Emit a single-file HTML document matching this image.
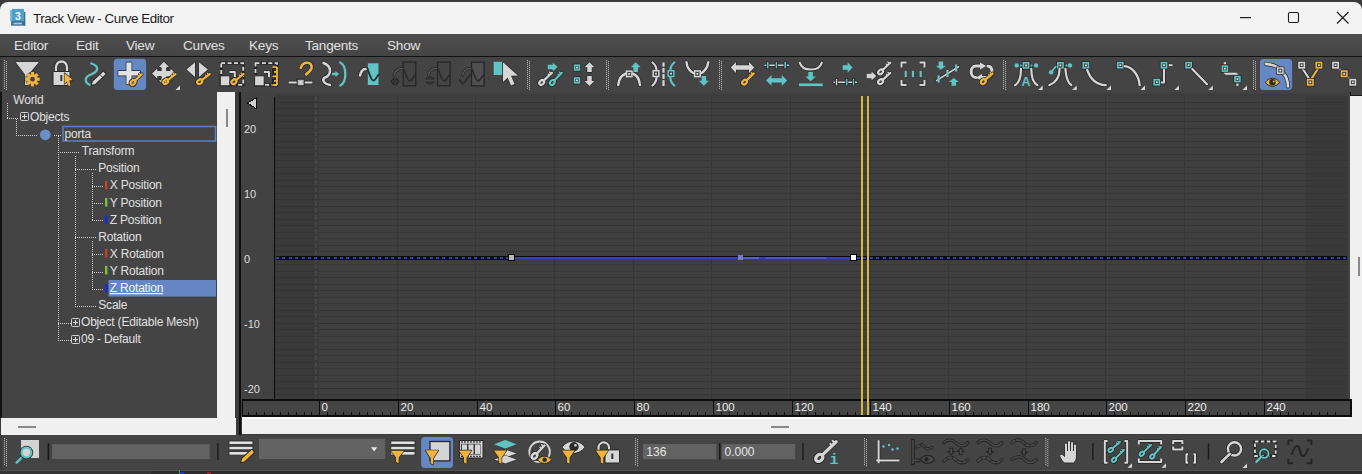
<!DOCTYPE html>
<html><head><meta charset="utf-8">
<style>
*{margin:0;padding:0;box-sizing:border-box}
html,body{width:1362px;height:474px;overflow:hidden;background:#3a3a3a;font-family:"Liberation Sans",sans-serif}
.abs{position:absolute}
#title{left:0;top:2px;width:1362px;height:32px;background:#f3f3f3;border-radius:8px 8px 0 0}
#title .t{left:33px;top:9px;font-size:13.4px;color:#1c1c1c;letter-spacing:-0.45px;white-space:nowrap}
#menu{left:0;top:34px;width:1362px;height:23px;background:linear-gradient(#4e4e4e,#454545);border-bottom:1px solid #111}
#menu span{position:absolute;top:3.6px;font-size:13.6px;letter-spacing:-0.25px;color:#e0e0e0;white-space:nowrap}
#tb{left:0;top:57px;width:1362px;height:35px;background:#444;border-left:2px solid #3a3a3a}
#tree{left:0;top:92px;width:217px;height:326px;background:#444;border-left:2px solid #121212}
#tree .r{position:absolute;font-size:12px;color:#e2e2e2;white-space:nowrap;line-height:14px}
#vs1{left:217px;top:92px;width:18px;height:326px;background:#f0f0f0}
#hs1{left:1px;top:418px;width:235px;height:17px;background:#f0f0f0}
#sep{left:236px;top:92px;width:6px;height:343px;background:#3a3a3a}
#graph{left:241px;top:92px;width:1109px;height:325px;background:#434343}
#vs2{left:1350px;top:96px;width:12px;height:338px;background:#f0f0f0}
#hs2{left:242px;top:417px;width:1108px;height:17px;background:#f0f0f0}
#btb{left:0;top:435px;width:1362px;height:35px;background:#444;border-left:2px solid #3a3a3a;border-bottom-left-radius:6px}
#bstrip{left:0;top:470px;width:1362px;height:4px;background:#2c2c2c;border-top:1px solid #525252}
</style></head><body>
<div id="title" class="abs">
  <div class="abs t">Track View - Curve Editor</div>
  <svg class="abs" style="left:0;top:0" width="60" height="32">
    <rect x="10" y="8" width="3" height="11" fill="#7ab8dc"/>
    <rect x="24" y="10" width="1.3" height="13.5" fill="#3b6f90"/>
    <rect x="12" y="6.9" width="12" height="12.2" fill="#4f9fcb"/>
    <rect x="11.1" y="19" width="14" height="4.7" fill="#3d7193"/>
    <text x="15" y="18.4" font-size="10.5" font-weight="bold" fill="#f4f8fb" font-family="Liberation Sans">3</text>
    <rect x="13.5" y="20.6" width="8.5" height="1.8" fill="#a9c4d6"/>
  </svg>
  <svg class="abs" style="left:0;top:-2px" width="1362" height="34">
    <rect x="1240" y="17" width="11" height="1.2" fill="#1c1c1c"/>
    <rect x="1288.5" y="12.5" width="10" height="10" rx="1.5" fill="none" stroke="#1c1c1c" stroke-width="1.1"/>
    <path d="M1337,12 L1348.5,23.5 M1348.5,12 L1337,23.5" stroke="#1c1c1c" stroke-width="1.2"/>
  </svg>

</div>
<div id="menu" class="abs">
  <span style="left:14px">Editor</span><span style="left:76px">Edit</span><span style="left:126px">View</span><span style="left:183px">Curves</span><span style="left:249px">Keys</span><span style="left:305px">Tangents</span><span style="left:387px">Show</span>
</div>
<div id="tb" class="abs"></div>
<div id="tree" class="abs"></div>
<svg class="abs" style="left:0;top:0" width="240" height="474"><text x="13.3" y="103.9" fill="#e0e0e0" font-size="12" letter-spacing="-0.2" font-family="Liberation Sans" >World</text><line x1="7.5" y1="103" x2="7.5" y2="118" stroke="#cfcfcf" stroke-width="1" stroke-dasharray="1,1"/><line x1="7" y1="118.5" x2="19" y2="118.5" stroke="#cfcfcf" stroke-width="1" stroke-dasharray="1,1"/><rect x="20.5" y="112.5" width="8" height="8" fill="none" stroke="#d0d0d0" stroke-width="1" rx="1"/><rect x="22" y="116" width="5" height="1" fill="#d8d8d8"/><rect x="24" y="114" width="1" height="5" fill="#d8d8d8"/><text x="30" y="121.0" fill="#e0e0e0" font-size="12" letter-spacing="-0.2" font-family="Liberation Sans" >Objects</text><line x1="16.5" y1="119" x2="16.5" y2="135" stroke="#cfcfcf" stroke-width="1" stroke-dasharray="1,1"/><line x1="16" y1="135.5" x2="37" y2="135.5" stroke="#cfcfcf" stroke-width="1" stroke-dasharray="1,1"/><circle cx="45.3" cy="134.8" r="5.4" fill="#6b8dc9"/><line x1="54" y1="135.5" x2="62" y2="135.5" stroke="#cfcfcf" stroke-width="1" stroke-dasharray="1,1"/><rect x="63" y="126.5" width="152.5" height="14.5" fill="none" stroke="#5f7fbf" stroke-width="1.5"/><text x="64.5" y="138.1" fill="#e0e0e0" font-size="12" letter-spacing="-0.2" font-family="Liberation Sans" >porta</text><line x1="58.5" y1="136" x2="58.5" y2="340" stroke="#cfcfcf" stroke-width="1" stroke-dasharray="1,1"/><line x1="58" y1="152.5" x2="80" y2="152.5" stroke="#cfcfcf" stroke-width="1" stroke-dasharray="1,1"/><text x="81.8" y="155.2" fill="#e0e0e0" font-size="12" letter-spacing="-0.2" font-family="Liberation Sans" >Transform</text><line x1="75.5" y1="156" x2="75.5" y2="306" stroke="#cfcfcf" stroke-width="1" stroke-dasharray="1,1"/><line x1="75" y1="169.5" x2="96" y2="169.5" stroke="#cfcfcf" stroke-width="1" stroke-dasharray="1,1"/><text x="98.3" y="172.3" fill="#e0e0e0" font-size="12" letter-spacing="-0.2" font-family="Liberation Sans" >Position</text><line x1="92.5" y1="173" x2="92.5" y2="220" stroke="#cfcfcf" stroke-width="1" stroke-dasharray="1,1"/><line x1="92" y1="186.5" x2="104" y2="186.5" stroke="#cfcfcf" stroke-width="1" stroke-dasharray="1,1"/><rect x="105" y="181" width="2.4" height="8.5" fill="#c8401e"/><text x="109.8" y="189.4" fill="#e0e0e0" font-size="12" letter-spacing="-0.2" font-family="Liberation Sans" >X Position</text><line x1="92" y1="203.5" x2="104" y2="203.5" stroke="#cfcfcf" stroke-width="1" stroke-dasharray="1,1"/><rect x="105" y="198" width="2.4" height="8.5" fill="#78c040"/><text x="109.8" y="206.5" fill="#e0e0e0" font-size="12" letter-spacing="-0.2" font-family="Liberation Sans" >Y Position</text><line x1="92" y1="220.5" x2="104" y2="220.5" stroke="#cfcfcf" stroke-width="1" stroke-dasharray="1,1"/><rect x="105" y="215" width="2.4" height="8.5" fill="#1428e8"/><text x="109.8" y="223.6" fill="#e0e0e0" font-size="12" letter-spacing="-0.2" font-family="Liberation Sans" >Z Position</text><line x1="75" y1="237.5" x2="96" y2="237.5" stroke="#cfcfcf" stroke-width="1" stroke-dasharray="1,1"/><text x="98.3" y="240.7" fill="#e0e0e0" font-size="12" letter-spacing="-0.2" font-family="Liberation Sans" >Rotation</text><line x1="92.5" y1="241" x2="92.5" y2="289" stroke="#cfcfcf" stroke-width="1" stroke-dasharray="1,1"/><rect x="108.5" y="280" width="107.5" height="16.6" fill="#6586c2"/><line x1="92" y1="254.5" x2="104" y2="254.5" stroke="#cfcfcf" stroke-width="1" stroke-dasharray="1,1"/><rect x="105" y="249" width="2.4" height="8.5" fill="#c8401e"/><text x="109.8" y="257.8" fill="#e0e0e0" font-size="12" letter-spacing="-0.2" font-family="Liberation Sans" >X Rotation</text><line x1="92" y1="272.5" x2="104" y2="272.5" stroke="#cfcfcf" stroke-width="1" stroke-dasharray="1,1"/><rect x="105" y="266" width="2.4" height="8.5" fill="#78c040"/><text x="109.8" y="274.9" fill="#e0e0e0" font-size="12" letter-spacing="-0.2" font-family="Liberation Sans" >Y Rotation</text><line x1="92" y1="289.5" x2="104" y2="289.5" stroke="#cfcfcf" stroke-width="1" stroke-dasharray="1,1"/><rect x="105" y="284" width="2.4" height="8.5" fill="#1428e8"/><text x="109.8" y="292.0" fill="#f4f4f4" font-size="12" letter-spacing="-0.2" font-family="Liberation Sans" text-decoration="underline">Z Rotation</text><rect x="110" y="293" width="53" height="1" fill="#f0f0f0"/><line x1="75" y1="306.5" x2="96" y2="306.5" stroke="#cfcfcf" stroke-width="1" stroke-dasharray="1,1"/><text x="98.3" y="309.1" fill="#e0e0e0" font-size="12" letter-spacing="-0.2" font-family="Liberation Sans" >Scale</text><line x1="58" y1="323.5" x2="71" y2="323.5" stroke="#cfcfcf" stroke-width="1" stroke-dasharray="1,1"/><rect x="71.5" y="318.5" width="8" height="8" fill="none" stroke="#d0d0d0" stroke-width="1" rx="1"/><rect x="73" y="322" width="5" height="1" fill="#d8d8d8"/><rect x="75" y="320" width="1" height="5" fill="#d8d8d8"/><text x="81" y="326.2" fill="#e0e0e0" font-size="12" letter-spacing="-0.2" font-family="Liberation Sans" >Object (Editable Mesh)</text><line x1="58" y1="340.5" x2="71" y2="340.5" stroke="#cfcfcf" stroke-width="1" stroke-dasharray="1,1"/><rect x="71.5" y="335.5" width="8" height="8" fill="none" stroke="#d0d0d0" stroke-width="1" rx="1"/><rect x="73" y="339" width="5" height="1" fill="#d8d8d8"/><rect x="75" y="337" width="1" height="5" fill="#d8d8d8"/><text x="81" y="343.3" fill="#e0e0e0" font-size="12" letter-spacing="-0.2" font-family="Liberation Sans" >09 - Default</text></svg>
<div id="vs1" class="abs"></div>
<div id="hs1" class="abs"></div>
<div id="sep" class="abs"></div>
<div id="graph" class="abs"></div>
<svg class="abs" style="left:0;top:0" width="1362" height="474" shape-rendering="crispEdges"><rect x="241" y="92" width="1109" height="307" fill="#424242" /><rect x="275" y="94" width="1071" height="2" fill="#3c3c3c" /><rect x="275" y="96" width="1073" height="303" fill="#3a3a3a" /><rect x="319" y="96" width="986" height="303" fill="#3f3f3f" /><rect x="275" y="394" width="44" height="1" fill="#343434" /><rect x="319" y="394" width="986" height="1" fill="#363636" /><rect x="1305" y="394" width="43" height="1" fill="#363636" /><rect x="275" y="388" width="44" height="1" fill="#343434" /><rect x="319" y="388" width="986" height="1" fill="#333333" /><rect x="1305" y="388" width="43" height="1" fill="#363636" /><rect x="275" y="381" width="44" height="1" fill="#343434" /><rect x="319" y="381" width="986" height="1" fill="#363636" /><rect x="1305" y="381" width="43" height="1" fill="#363636" /><rect x="275" y="375" width="44" height="1" fill="#343434" /><rect x="319" y="375" width="986" height="1" fill="#363636" /><rect x="1305" y="375" width="43" height="1" fill="#363636" /><rect x="275" y="368" width="44" height="1" fill="#343434" /><rect x="319" y="368" width="986" height="1" fill="#363636" /><rect x="1305" y="368" width="43" height="1" fill="#363636" /><rect x="275" y="362" width="44" height="1" fill="#343434" /><rect x="319" y="362" width="986" height="1" fill="#363636" /><rect x="1305" y="362" width="43" height="1" fill="#363636" /><rect x="275" y="355" width="44" height="1" fill="#343434" /><rect x="319" y="355" width="986" height="1" fill="#363636" /><rect x="1305" y="355" width="43" height="1" fill="#363636" /><rect x="275" y="349" width="44" height="1" fill="#343434" /><rect x="319" y="349" width="986" height="1" fill="#363636" /><rect x="1305" y="349" width="43" height="1" fill="#363636" /><rect x="275" y="342" width="44" height="1" fill="#343434" /><rect x="319" y="342" width="986" height="1" fill="#363636" /><rect x="1305" y="342" width="43" height="1" fill="#363636" /><rect x="275" y="336" width="44" height="1" fill="#343434" /><rect x="319" y="336" width="986" height="1" fill="#363636" /><rect x="1305" y="336" width="43" height="1" fill="#363636" /><rect x="275" y="329" width="44" height="1" fill="#343434" /><rect x="319" y="329" width="986" height="1" fill="#363636" /><rect x="1305" y="329" width="43" height="1" fill="#363636" /><rect x="275" y="323" width="44" height="1" fill="#343434" /><rect x="319" y="323" width="986" height="1" fill="#333333" /><rect x="1305" y="323" width="43" height="1" fill="#363636" /><rect x="275" y="316" width="44" height="1" fill="#343434" /><rect x="319" y="316" width="986" height="1" fill="#363636" /><rect x="1305" y="316" width="43" height="1" fill="#363636" /><rect x="275" y="310" width="44" height="1" fill="#343434" /><rect x="319" y="310" width="986" height="1" fill="#363636" /><rect x="1305" y="310" width="43" height="1" fill="#363636" /><rect x="275" y="303" width="44" height="1" fill="#343434" /><rect x="319" y="303" width="986" height="1" fill="#363636" /><rect x="1305" y="303" width="43" height="1" fill="#363636" /><rect x="275" y="297" width="44" height="1" fill="#343434" /><rect x="319" y="297" width="986" height="1" fill="#363636" /><rect x="1305" y="297" width="43" height="1" fill="#363636" /><rect x="275" y="290" width="44" height="1" fill="#343434" /><rect x="319" y="290" width="986" height="1" fill="#363636" /><rect x="1305" y="290" width="43" height="1" fill="#363636" /><rect x="275" y="284" width="44" height="1" fill="#343434" /><rect x="319" y="284" width="986" height="1" fill="#363636" /><rect x="1305" y="284" width="43" height="1" fill="#363636" /><rect x="275" y="277" width="44" height="1" fill="#343434" /><rect x="319" y="277" width="986" height="1" fill="#363636" /><rect x="1305" y="277" width="43" height="1" fill="#363636" /><rect x="275" y="271" width="44" height="1" fill="#343434" /><rect x="319" y="271" width="986" height="1" fill="#363636" /><rect x="1305" y="271" width="43" height="1" fill="#363636" /><rect x="275" y="264" width="44" height="1" fill="#343434" /><rect x="319" y="264" width="986" height="1" fill="#363636" /><rect x="1305" y="264" width="43" height="1" fill="#363636" /><rect x="275" y="258" width="44" height="1" fill="#343434" /><rect x="319" y="258" width="986" height="1" fill="#333333" /><rect x="1305" y="258" width="43" height="1" fill="#363636" /><rect x="275" y="251" width="44" height="1" fill="#343434" /><rect x="319" y="251" width="986" height="1" fill="#363636" /><rect x="1305" y="251" width="43" height="1" fill="#363636" /><rect x="275" y="245" width="44" height="1" fill="#343434" /><rect x="319" y="245" width="986" height="1" fill="#363636" /><rect x="1305" y="245" width="43" height="1" fill="#363636" /><rect x="275" y="238" width="44" height="1" fill="#343434" /><rect x="319" y="238" width="986" height="1" fill="#363636" /><rect x="1305" y="238" width="43" height="1" fill="#363636" /><rect x="275" y="232" width="44" height="1" fill="#343434" /><rect x="319" y="232" width="986" height="1" fill="#363636" /><rect x="1305" y="232" width="43" height="1" fill="#363636" /><rect x="275" y="225" width="44" height="1" fill="#343434" /><rect x="319" y="225" width="986" height="1" fill="#363636" /><rect x="1305" y="225" width="43" height="1" fill="#363636" /><rect x="275" y="219" width="44" height="1" fill="#343434" /><rect x="319" y="219" width="986" height="1" fill="#363636" /><rect x="1305" y="219" width="43" height="1" fill="#363636" /><rect x="275" y="212" width="44" height="1" fill="#343434" /><rect x="319" y="212" width="986" height="1" fill="#363636" /><rect x="1305" y="212" width="43" height="1" fill="#363636" /><rect x="275" y="206" width="44" height="1" fill="#343434" /><rect x="319" y="206" width="986" height="1" fill="#363636" /><rect x="1305" y="206" width="43" height="1" fill="#363636" /><rect x="275" y="199" width="44" height="1" fill="#343434" /><rect x="319" y="199" width="986" height="1" fill="#363636" /><rect x="1305" y="199" width="43" height="1" fill="#363636" /><rect x="275" y="193" width="44" height="1" fill="#343434" /><rect x="319" y="193" width="986" height="1" fill="#333333" /><rect x="1305" y="193" width="43" height="1" fill="#363636" /><rect x="275" y="186" width="44" height="1" fill="#343434" /><rect x="319" y="186" width="986" height="1" fill="#363636" /><rect x="1305" y="186" width="43" height="1" fill="#363636" /><rect x="275" y="180" width="44" height="1" fill="#343434" /><rect x="319" y="180" width="986" height="1" fill="#363636" /><rect x="1305" y="180" width="43" height="1" fill="#363636" /><rect x="275" y="173" width="44" height="1" fill="#343434" /><rect x="319" y="173" width="986" height="1" fill="#363636" /><rect x="1305" y="173" width="43" height="1" fill="#363636" /><rect x="275" y="167" width="44" height="1" fill="#343434" /><rect x="319" y="167" width="986" height="1" fill="#363636" /><rect x="1305" y="167" width="43" height="1" fill="#363636" /><rect x="275" y="160" width="44" height="1" fill="#343434" /><rect x="319" y="160" width="986" height="1" fill="#363636" /><rect x="1305" y="160" width="43" height="1" fill="#363636" /><rect x="275" y="154" width="44" height="1" fill="#343434" /><rect x="319" y="154" width="986" height="1" fill="#363636" /><rect x="1305" y="154" width="43" height="1" fill="#363636" /><rect x="275" y="147" width="44" height="1" fill="#343434" /><rect x="319" y="147" width="986" height="1" fill="#363636" /><rect x="1305" y="147" width="43" height="1" fill="#363636" /><rect x="275" y="141" width="44" height="1" fill="#343434" /><rect x="319" y="141" width="986" height="1" fill="#363636" /><rect x="1305" y="141" width="43" height="1" fill="#363636" /><rect x="275" y="134" width="44" height="1" fill="#343434" /><rect x="319" y="134" width="986" height="1" fill="#363636" /><rect x="1305" y="134" width="43" height="1" fill="#363636" /><rect x="275" y="128" width="44" height="1" fill="#343434" /><rect x="319" y="128" width="986" height="1" fill="#333333" /><rect x="1305" y="128" width="43" height="1" fill="#363636" /><rect x="275" y="121" width="44" height="1" fill="#343434" /><rect x="319" y="121" width="986" height="1" fill="#363636" /><rect x="1305" y="121" width="43" height="1" fill="#363636" /><rect x="275" y="115" width="44" height="1" fill="#343434" /><rect x="319" y="115" width="986" height="1" fill="#363636" /><rect x="1305" y="115" width="43" height="1" fill="#363636" /><rect x="275" y="108" width="44" height="1" fill="#343434" /><rect x="319" y="108" width="986" height="1" fill="#363636" /><rect x="1305" y="108" width="43" height="1" fill="#363636" /><rect x="275" y="102" width="44" height="1" fill="#343434" /><rect x="319" y="102" width="986" height="1" fill="#363636" /><rect x="1305" y="102" width="43" height="1" fill="#363636" /><rect x="397" y="96" width="1" height="303" fill="#363636" /><rect x="475" y="96" width="1" height="303" fill="#363636" /><rect x="554" y="96" width="1" height="303" fill="#363636" /><rect x="633" y="96" width="1" height="303" fill="#363636" /><rect x="711" y="96" width="1" height="303" fill="#363636" /><rect x="790" y="96" width="1" height="303" fill="#363636" /><rect x="869" y="96" width="1" height="303" fill="#363636" /><rect x="948" y="96" width="1" height="303" fill="#363636" /><rect x="1026" y="96" width="1" height="303" fill="#363636" /><rect x="1105" y="96" width="1" height="303" fill="#363636" /><rect x="1184" y="96" width="1" height="303" fill="#363636" /><rect x="1262" y="96" width="1" height="303" fill="#363636" /><line x1="316" y1="96" x2="316" y2="399" stroke="#464646" stroke-width="2" stroke-dasharray="5,2"/><rect x="318" y="96" width="1" height="303" fill="#383838" /><rect x="274" y="97" width="1" height="302" fill="#0a0a0a" /><text x="244" y="132.5" fill="#dedede" font-size="11" font-family="Liberation Sans">20</text><text x="244" y="197.5" fill="#dedede" font-size="11" font-family="Liberation Sans">10</text><text x="244" y="262.5" fill="#dedede" font-size="11" font-family="Liberation Sans">0</text><text x="244" y="327.5" fill="#dedede" font-size="11" font-family="Liberation Sans">-10</text><text x="244" y="392.5" fill="#dedede" font-size="11" font-family="Liberation Sans">-20</text><path d="M247.5,103 L256,98 L256,108.5 Z" fill="#d0d0d0" stroke="#111" stroke-width="1"/><rect x="242" y="399" width="1110" height="18" fill="#0c0c0c" /><rect x="243" y="401" width="1107" height="14" fill="#454545" /><rect x="248" y="412" width="1" height="3" fill="#0c0c0c" /><rect x="256" y="412" width="1" height="3" fill="#0c0c0c" /><rect x="264" y="412" width="1" height="3" fill="#0c0c0c" /><rect x="272" y="412" width="1" height="3" fill="#0c0c0c" /><rect x="280" y="412" width="1" height="3" fill="#0c0c0c" /><rect x="288" y="412" width="1" height="3" fill="#0c0c0c" /><rect x="296" y="412" width="1" height="3" fill="#0c0c0c" /><rect x="304" y="412" width="1" height="3" fill="#0c0c0c" /><rect x="311" y="412" width="1" height="3" fill="#0c0c0c" /><rect x="319" y="401" width="1" height="14" fill="#0c0c0c" /><rect x="327" y="412" width="1" height="3" fill="#0c0c0c" /><rect x="335" y="412" width="1" height="3" fill="#0c0c0c" /><rect x="343" y="412" width="1" height="3" fill="#0c0c0c" /><rect x="351" y="412" width="1" height="3" fill="#0c0c0c" /><rect x="359" y="412" width="1" height="3" fill="#0c0c0c" /><rect x="367" y="412" width="1" height="3" fill="#0c0c0c" /><rect x="374" y="412" width="1" height="3" fill="#0c0c0c" /><rect x="382" y="412" width="1" height="3" fill="#0c0c0c" /><rect x="390" y="412" width="1" height="3" fill="#0c0c0c" /><rect x="398" y="401" width="1" height="14" fill="#0c0c0c" /><rect x="406" y="412" width="1" height="3" fill="#0c0c0c" /><rect x="414" y="412" width="1" height="3" fill="#0c0c0c" /><rect x="422" y="412" width="1" height="3" fill="#0c0c0c" /><rect x="430" y="412" width="1" height="3" fill="#0c0c0c" /><rect x="437" y="412" width="1" height="3" fill="#0c0c0c" /><rect x="445" y="412" width="1" height="3" fill="#0c0c0c" /><rect x="453" y="412" width="1" height="3" fill="#0c0c0c" /><rect x="461" y="412" width="1" height="3" fill="#0c0c0c" /><rect x="469" y="412" width="1" height="3" fill="#0c0c0c" /><rect x="477" y="401" width="1" height="14" fill="#0c0c0c" /><rect x="485" y="412" width="1" height="3" fill="#0c0c0c" /><rect x="492" y="412" width="1" height="3" fill="#0c0c0c" /><rect x="500" y="412" width="1" height="3" fill="#0c0c0c" /><rect x="508" y="412" width="1" height="3" fill="#0c0c0c" /><rect x="516" y="412" width="1" height="3" fill="#0c0c0c" /><rect x="524" y="412" width="1" height="3" fill="#0c0c0c" /><rect x="532" y="412" width="1" height="3" fill="#0c0c0c" /><rect x="540" y="412" width="1" height="3" fill="#0c0c0c" /><rect x="548" y="412" width="1" height="3" fill="#0c0c0c" /><rect x="555" y="401" width="1" height="14" fill="#0c0c0c" /><rect x="563" y="412" width="1" height="3" fill="#0c0c0c" /><rect x="571" y="412" width="1" height="3" fill="#0c0c0c" /><rect x="579" y="412" width="1" height="3" fill="#0c0c0c" /><rect x="587" y="412" width="1" height="3" fill="#0c0c0c" /><rect x="595" y="412" width="1" height="3" fill="#0c0c0c" /><rect x="603" y="412" width="1" height="3" fill="#0c0c0c" /><rect x="611" y="412" width="1" height="3" fill="#0c0c0c" /><rect x="618" y="412" width="1" height="3" fill="#0c0c0c" /><rect x="626" y="412" width="1" height="3" fill="#0c0c0c" /><rect x="634" y="401" width="1" height="14" fill="#0c0c0c" /><rect x="642" y="412" width="1" height="3" fill="#0c0c0c" /><rect x="650" y="412" width="1" height="3" fill="#0c0c0c" /><rect x="658" y="412" width="1" height="3" fill="#0c0c0c" /><rect x="666" y="412" width="1" height="3" fill="#0c0c0c" /><rect x="674" y="412" width="1" height="3" fill="#0c0c0c" /><rect x="681" y="412" width="1" height="3" fill="#0c0c0c" /><rect x="689" y="412" width="1" height="3" fill="#0c0c0c" /><rect x="697" y="412" width="1" height="3" fill="#0c0c0c" /><rect x="705" y="412" width="1" height="3" fill="#0c0c0c" /><rect x="713" y="401" width="1" height="14" fill="#0c0c0c" /><rect x="721" y="412" width="1" height="3" fill="#0c0c0c" /><rect x="729" y="412" width="1" height="3" fill="#0c0c0c" /><rect x="737" y="412" width="1" height="3" fill="#0c0c0c" /><rect x="744" y="412" width="1" height="3" fill="#0c0c0c" /><rect x="752" y="412" width="1" height="3" fill="#0c0c0c" /><rect x="760" y="412" width="1" height="3" fill="#0c0c0c" /><rect x="768" y="412" width="1" height="3" fill="#0c0c0c" /><rect x="776" y="412" width="1" height="3" fill="#0c0c0c" /><rect x="784" y="412" width="1" height="3" fill="#0c0c0c" /><rect x="792" y="401" width="1" height="14" fill="#0c0c0c" /><rect x="799" y="412" width="1" height="3" fill="#0c0c0c" /><rect x="807" y="412" width="1" height="3" fill="#0c0c0c" /><rect x="815" y="412" width="1" height="3" fill="#0c0c0c" /><rect x="823" y="412" width="1" height="3" fill="#0c0c0c" /><rect x="831" y="412" width="1" height="3" fill="#0c0c0c" /><rect x="839" y="412" width="1" height="3" fill="#0c0c0c" /><rect x="847" y="412" width="1" height="3" fill="#0c0c0c" /><rect x="855" y="412" width="1" height="3" fill="#0c0c0c" /><rect x="862" y="412" width="1" height="3" fill="#0c0c0c" /><rect x="870" y="401" width="1" height="14" fill="#0c0c0c" /><rect x="878" y="412" width="1" height="3" fill="#0c0c0c" /><rect x="886" y="412" width="1" height="3" fill="#0c0c0c" /><rect x="894" y="412" width="1" height="3" fill="#0c0c0c" /><rect x="902" y="412" width="1" height="3" fill="#0c0c0c" /><rect x="910" y="412" width="1" height="3" fill="#0c0c0c" /><rect x="918" y="412" width="1" height="3" fill="#0c0c0c" /><rect x="925" y="412" width="1" height="3" fill="#0c0c0c" /><rect x="933" y="412" width="1" height="3" fill="#0c0c0c" /><rect x="941" y="412" width="1" height="3" fill="#0c0c0c" /><rect x="949" y="401" width="1" height="14" fill="#0c0c0c" /><rect x="957" y="412" width="1" height="3" fill="#0c0c0c" /><rect x="965" y="412" width="1" height="3" fill="#0c0c0c" /><rect x="973" y="412" width="1" height="3" fill="#0c0c0c" /><rect x="981" y="412" width="1" height="3" fill="#0c0c0c" /><rect x="988" y="412" width="1" height="3" fill="#0c0c0c" /><rect x="996" y="412" width="1" height="3" fill="#0c0c0c" /><rect x="1004" y="412" width="1" height="3" fill="#0c0c0c" /><rect x="1012" y="412" width="1" height="3" fill="#0c0c0c" /><rect x="1020" y="412" width="1" height="3" fill="#0c0c0c" /><rect x="1028" y="401" width="1" height="14" fill="#0c0c0c" /><rect x="1036" y="412" width="1" height="3" fill="#0c0c0c" /><rect x="1044" y="412" width="1" height="3" fill="#0c0c0c" /><rect x="1051" y="412" width="1" height="3" fill="#0c0c0c" /><rect x="1059" y="412" width="1" height="3" fill="#0c0c0c" /><rect x="1067" y="412" width="1" height="3" fill="#0c0c0c" /><rect x="1075" y="412" width="1" height="3" fill="#0c0c0c" /><rect x="1083" y="412" width="1" height="3" fill="#0c0c0c" /><rect x="1091" y="412" width="1" height="3" fill="#0c0c0c" /><rect x="1099" y="412" width="1" height="3" fill="#0c0c0c" /><rect x="1106" y="401" width="1" height="14" fill="#0c0c0c" /><rect x="1114" y="412" width="1" height="3" fill="#0c0c0c" /><rect x="1122" y="412" width="1" height="3" fill="#0c0c0c" /><rect x="1130" y="412" width="1" height="3" fill="#0c0c0c" /><rect x="1138" y="412" width="1" height="3" fill="#0c0c0c" /><rect x="1146" y="412" width="1" height="3" fill="#0c0c0c" /><rect x="1154" y="412" width="1" height="3" fill="#0c0c0c" /><rect x="1162" y="412" width="1" height="3" fill="#0c0c0c" /><rect x="1169" y="412" width="1" height="3" fill="#0c0c0c" /><rect x="1177" y="412" width="1" height="3" fill="#0c0c0c" /><rect x="1185" y="401" width="1" height="14" fill="#0c0c0c" /><rect x="1193" y="412" width="1" height="3" fill="#0c0c0c" /><rect x="1201" y="412" width="1" height="3" fill="#0c0c0c" /><rect x="1209" y="412" width="1" height="3" fill="#0c0c0c" /><rect x="1217" y="412" width="1" height="3" fill="#0c0c0c" /><rect x="1225" y="412" width="1" height="3" fill="#0c0c0c" /><rect x="1232" y="412" width="1" height="3" fill="#0c0c0c" /><rect x="1240" y="412" width="1" height="3" fill="#0c0c0c" /><rect x="1248" y="412" width="1" height="3" fill="#0c0c0c" /><rect x="1256" y="412" width="1" height="3" fill="#0c0c0c" /><rect x="1264" y="401" width="1" height="14" fill="#0c0c0c" /><rect x="1272" y="412" width="1" height="3" fill="#0c0c0c" /><rect x="1280" y="412" width="1" height="3" fill="#0c0c0c" /><rect x="1288" y="412" width="1" height="3" fill="#0c0c0c" /><rect x="1295" y="412" width="1" height="3" fill="#0c0c0c" /><rect x="1303" y="412" width="1" height="3" fill="#0c0c0c" /><rect x="1311" y="412" width="1" height="3" fill="#0c0c0c" /><rect x="1319" y="412" width="1" height="3" fill="#0c0c0c" /><rect x="1327" y="412" width="1" height="3" fill="#0c0c0c" /><rect x="1335" y="412" width="1" height="3" fill="#0c0c0c" /><text x="321.5" y="411" fill="#ececec" font-size="11.5" font-family="Liberation Sans">0</text><text x="400.5" y="411" fill="#ececec" font-size="11.5" font-family="Liberation Sans">20</text><text x="479.5" y="411" fill="#ececec" font-size="11.5" font-family="Liberation Sans">40</text><text x="557.5" y="411" fill="#ececec" font-size="11.5" font-family="Liberation Sans">60</text><text x="636.5" y="411" fill="#ececec" font-size="11.5" font-family="Liberation Sans">80</text><text x="715.5" y="411" fill="#ececec" font-size="11.5" font-family="Liberation Sans">100</text><text x="794.5" y="411" fill="#ececec" font-size="11.5" font-family="Liberation Sans">120</text><text x="872.5" y="411" fill="#ececec" font-size="11.5" font-family="Liberation Sans">140</text><text x="951.5" y="411" fill="#ececec" font-size="11.5" font-family="Liberation Sans">160</text><text x="1030.5" y="411" fill="#ececec" font-size="11.5" font-family="Liberation Sans">180</text><text x="1108.5" y="411" fill="#ececec" font-size="11.5" font-family="Liberation Sans">200</text><text x="1187.5" y="411" fill="#ececec" font-size="11.5" font-family="Liberation Sans">220</text><text x="1266.5" y="411" fill="#ececec" font-size="11.5" font-family="Liberation Sans">240</text><rect x="276" y="256" width="235" height="3.6" fill="#0a0a14"/><line x1="276" y1="258" x2="509" y2="258" stroke="#363ec4" stroke-width="2.2" stroke-dasharray="3,3.4"/><rect x="855" y="256" width="492" height="3.6" fill="#0a0a14"/><line x1="857" y1="258" x2="1347" y2="258" stroke="#363ec4" stroke-width="2.2" stroke-dasharray="3,3.4"/><rect x="511" y="256" width="344" height="3" fill="#0a0a14"/><rect x="512" y="256.8" width="342" height="1.8" fill="#3a40bc"/><rect x="743" y="256.8" width="16" height="1.8" fill="#5a5ec8"/><rect x="766" y="256.8" width="60" height="1.8" fill="#5054c4"/><rect x="508" y="254" width="7" height="7" fill="#000" /><rect x="509" y="255" width="5" height="5" fill="#b8b8b8" /><rect x="850" y="254" width="7" height="7" fill="#000" /><rect x="851" y="255" width="5" height="5" fill="#ffffff" /><rect x="737.5" y="255" width="5" height="5" fill="#7878d8" /><rect x="739" y="256.5" width="2" height="2" fill="#8a8a70" /><rect x="861" y="96" width="2" height="319" fill="#d4b83c" /><rect x="867" y="96" width="2" height="319" fill="#d4b83c" /></svg>
<div id="vs2" class="abs"></div>
<div id="hs2" class="abs"></div>
<div class="abs" style="left:239px;top:92px;width:2px;height:343px;background:#0e0e0e"></div>
<div class="abs" style="left:226px;top:109px;width:2px;height:18px;background:#8a8a8a"></div>
<div class="abs" style="left:18px;top:426px;width:18px;height:2px;background:#8a8a8a"></div>
<div class="abs" style="left:1358px;top:257px;width:2px;height:19px;background:#8a8a8a"></div>
<div class="abs" style="left:771px;top:426px;width:18px;height:2px;background:#8a8a8a"></div>
<div class="abs" style="left:242px;top:417px;width:1108px;height:2px;background:#fafafa"></div>
<div class="abs" style="left:1350px;top:399px;width:2px;height:18px;background:#0c0c0c"></div>
<div class="abs" style="left:1350px;top:92px;width:1px;height:4px;background:#0c0c0c"></div>
<div class="abs" style="left:1350px;top:95px;width:12px;height:1px;background:#1a1a1a"></div>
<div class="abs" style="left:1351px;top:92px;width:11px;height:3px;background:#444"></div>
<div id="btb" class="abs"></div>
<div id="bstrip" class="abs"></div>
<svg class="abs" style="left:0;top:0" width="1362" height="474"><rect x="4" y="60" width="1" height="29" fill="#5c5c5c"/><rect x="6" y="61" width="1" height="29" fill="#5c5c5c"/><rect x="4" y="60" width="1" height="1" fill="#a8a8a8"/><rect x="6" y="61" width="1" height="1" fill="#a8a8a8"/><rect x="4" y="62" width="1" height="1" fill="#a8a8a8"/><rect x="6" y="63" width="1" height="1" fill="#a8a8a8"/><rect x="4" y="64" width="1" height="1" fill="#a8a8a8"/><rect x="6" y="65" width="1" height="1" fill="#a8a8a8"/><rect x="4" y="66" width="1" height="1" fill="#a8a8a8"/><rect x="6" y="67" width="1" height="1" fill="#a8a8a8"/><rect x="4" y="68" width="1" height="1" fill="#a8a8a8"/><rect x="6" y="69" width="1" height="1" fill="#a8a8a8"/><rect x="4" y="70" width="1" height="1" fill="#a8a8a8"/><rect x="6" y="71" width="1" height="1" fill="#a8a8a8"/><rect x="4" y="72" width="1" height="1" fill="#a8a8a8"/><rect x="6" y="73" width="1" height="1" fill="#a8a8a8"/><rect x="4" y="74" width="1" height="1" fill="#a8a8a8"/><rect x="6" y="75" width="1" height="1" fill="#a8a8a8"/><rect x="4" y="76" width="1" height="1" fill="#a8a8a8"/><rect x="6" y="77" width="1" height="1" fill="#a8a8a8"/><rect x="4" y="78" width="1" height="1" fill="#a8a8a8"/><rect x="6" y="79" width="1" height="1" fill="#a8a8a8"/><rect x="4" y="80" width="1" height="1" fill="#a8a8a8"/><rect x="6" y="81" width="1" height="1" fill="#a8a8a8"/><rect x="4" y="82" width="1" height="1" fill="#a8a8a8"/><rect x="6" y="83" width="1" height="1" fill="#a8a8a8"/><rect x="4" y="84" width="1" height="1" fill="#a8a8a8"/><rect x="6" y="85" width="1" height="1" fill="#a8a8a8"/><rect x="4" y="86" width="1" height="1" fill="#a8a8a8"/><rect x="6" y="87" width="1" height="1" fill="#a8a8a8"/><rect x="4" y="88" width="1" height="1" fill="#a8a8a8"/><rect x="6" y="89" width="1" height="1" fill="#a8a8a8"/><polygon points="15.5,62 39,62 28.5,74.5 28.5,85 25,85 25,74.5" fill="#d6d6d6" stroke="#262626" stroke-width="1.2" stroke-linejoin="round" paint-order="stroke"/><g transform="translate(32.5,79.2)"><circle r="7.6" fill="#262626" opacity="0.5"/><rect x="-1.6" y="-7.2" width="3.2" height="3" fill="#f2b33a" transform="rotate(0)"/><rect x="-1.6" y="-7.2" width="3.2" height="3" fill="#f2b33a" transform="rotate(45)"/><rect x="-1.6" y="-7.2" width="3.2" height="3" fill="#f2b33a" transform="rotate(90)"/><rect x="-1.6" y="-7.2" width="3.2" height="3" fill="#f2b33a" transform="rotate(135)"/><rect x="-1.6" y="-7.2" width="3.2" height="3" fill="#f2b33a" transform="rotate(180)"/><rect x="-1.6" y="-7.2" width="3.2" height="3" fill="#f2b33a" transform="rotate(225)"/><rect x="-1.6" y="-7.2" width="3.2" height="3" fill="#f2b33a" transform="rotate(270)"/><rect x="-1.6" y="-7.2" width="3.2" height="3" fill="#f2b33a" transform="rotate(315)"/><circle r="4.9" fill="#f2b33a"/><circle r="2.4" fill="#444"/></g><path d="M56,72 V67 A5.5,5.5 0 0 1 67,67 V72" fill="none" stroke="#262626" stroke-width="3.6999999999999997" stroke-linecap="round" stroke-linejoin="round"/><path d="M56,72 V67 A5.5,5.5 0 0 1 67,67 V72" fill="none" stroke="#d6d6d6" stroke-width="2.3" stroke-linecap="round" stroke-linejoin="round"/><rect x="53" y="71.5" width="17" height="14" fill="#d6d6d6" rx="1" stroke="#262626" stroke-width="1"/><rect x="60.3" y="75" width="2" height="6" fill="#3a3a3a" rx="0" /><polygon points="64.5,73 72.8,80 69.3,80.5 70.5,85.5 68.5,86 66.5,81.5 64.5,84" fill="#f2b33a" stroke="#262626" stroke-width="1.2" stroke-linejoin="round" paint-order="stroke"/><path d="M91.3,63.5 C99,66 99,71 92,74 C84,77 84,82 90,85" fill="none" stroke="#5ec4c4" stroke-width="2.3" stroke-linecap="round" stroke-linejoin="round"/><g transform="translate(91,85.5) rotate(-43)"><path d="M0,0 L4,-2.2 L19,-2.2 L19,2.2 L4,2.2 Z" fill="#d6d6d6" stroke="#262626" stroke-width="1"/><line x1="14" y1="-2.2" x2="14" y2="2.2" stroke="#262626" stroke-width="0.8"/></g><rect x="113.8" y="58.8" width="32.3" height="31.2" fill="#6587c3" rx="3.5" /><polygon points="126.4,62.5 131.5,62.5 131.5,71 140,71 140,75.5 131.5,75.5 131.5,84.3 126.4,84.3 126.4,75.5 118.3,75.5 118.3,71 126.4,71" fill="#e2e2e2" stroke="#262626" stroke-width="1.3" stroke-linejoin="round" paint-order="stroke"/><g transform="translate(133,82.5) rotate(-43.3)"><ellipse cx="0" cy="0" rx="3.0" ry="2.325" fill="none" stroke="#262626" stroke-width="3.5"/><line x1="2.7" y1="0" x2="12.09669376317348" y2="0" stroke="#262626" stroke-width="3.5" stroke-linecap="round"/><line x1="10.79669376317348" y1="0" x2="10.79669376317348" y2="-2.9" stroke="#262626" stroke-width="2.6"/><line x1="8.29669376317348" y1="0" x2="8.29669376317348" y2="-2.4" stroke="#262626" stroke-width="2.6"/><ellipse cx="0" cy="0" rx="2.7" ry="2.0250000000000004" fill="none" stroke="#f2b33a" stroke-width="2.2"/><line x1="2.7" y1="0" x2="12.09669376317348" y2="0" stroke="#f2b33a" stroke-width="2.2" stroke-linecap="round"/><line x1="10.79669376317348" y1="0" x2="10.79669376317348" y2="-2.7" stroke="#f2b33a" stroke-width="1.4"/><line x1="8.29669376317348" y1="0" x2="8.29669376317348" y2="-2.2" stroke="#f2b33a" stroke-width="1.4"/></g><polygon points="163.9,61.8 169,67 166.5,67 166.5,71 170.5,71 170.5,68.5 175.5,73.6 170.5,78.7 170.5,76.2 166.5,76.2 166.5,80.2 169,80.2 163.9,85.5 158.8,80.2 161.3,80.2 161.3,76.2 157.3,76.2 157.3,78.7 152,73.6 157.3,68.5 157.3,71 161.3,71 161.3,67 158.8,67" fill="#d6d6d6" stroke="#262626" stroke-width="1.2" stroke-linejoin="round" paint-order="stroke"/><rect x="158.5" y="68" width="3" height="3" fill="#353535" rx="0" /><rect x="166.3" y="68" width="3" height="3" fill="#353535" rx="0" /><rect x="158.5" y="76" width="3" height="3" fill="#353535" rx="0" /><g transform="translate(165.7,81.7) rotate(-37.4)"><ellipse cx="0" cy="0" rx="3.0" ry="2.325" fill="none" stroke="#262626" stroke-width="3.5"/><line x1="2.7" y1="0" x2="12.340583454602145" y2="0" stroke="#262626" stroke-width="3.5" stroke-linecap="round"/><line x1="11.040583454602144" y1="0" x2="11.040583454602144" y2="-2.9" stroke="#262626" stroke-width="2.6"/><line x1="8.540583454602146" y1="0" x2="8.540583454602146" y2="-2.4" stroke="#262626" stroke-width="2.6"/><ellipse cx="0" cy="0" rx="2.7" ry="2.0250000000000004" fill="none" stroke="#f2b33a" stroke-width="2.2"/><line x1="2.7" y1="0" x2="12.340583454602145" y2="0" stroke="#f2b33a" stroke-width="2.2" stroke-linecap="round"/><line x1="11.040583454602144" y1="0" x2="11.040583454602144" y2="-2.7" stroke="#f2b33a" stroke-width="1.4"/><line x1="8.540583454602146" y1="0" x2="8.540583454602146" y2="-2.2" stroke="#f2b33a" stroke-width="1.4"/></g><polygon points="180,85.5 180,90 175.5,90" fill="#d6d6d6"  paint-order="stroke"/><polygon points="195,62.2 195,77 186.5,69.6" fill="#d6d6d6" stroke="#262626" stroke-width="1.2" stroke-linejoin="round" paint-order="stroke"/><polygon points="199,62.2 199,77 207.8,69.6" fill="#d6d6d6" stroke="#262626" stroke-width="1.2" stroke-linejoin="round" paint-order="stroke"/><g transform="translate(199.7,81.7) rotate(-36.6)"><ellipse cx="0" cy="0" rx="3.0" ry="2.325" fill="none" stroke="#262626" stroke-width="3.5"/><line x1="2.7" y1="0" x2="12.580143083447043" y2="0" stroke="#262626" stroke-width="3.5" stroke-linecap="round"/><line x1="11.280143083447042" y1="0" x2="11.280143083447042" y2="-2.9" stroke="#262626" stroke-width="2.6"/><line x1="8.780143083447044" y1="0" x2="8.780143083447044" y2="-2.4" stroke="#262626" stroke-width="2.6"/><ellipse cx="0" cy="0" rx="2.7" ry="2.0250000000000004" fill="none" stroke="#f2b33a" stroke-width="2.2"/><line x1="2.7" y1="0" x2="12.580143083447043" y2="0" stroke="#f2b33a" stroke-width="2.2" stroke-linecap="round"/><line x1="11.280143083447042" y1="0" x2="11.280143083447042" y2="-2.7" stroke="#f2b33a" stroke-width="1.4"/><line x1="8.780143083447044" y1="0" x2="8.780143083447044" y2="-2.2" stroke="#f2b33a" stroke-width="1.4"/></g><rect x="221.2" y="63.1" width="22" height="21.8" fill="none" stroke="#262626" stroke-width="3"/><rect x="221.2" y="63.1" width="22" height="21.8" fill="none" stroke="#d6d6d6" stroke-width="1.8" stroke-dasharray="4,2.4"/><rect x="220.3" y="75.8" width="9.6" height="10" fill="#d6d6d6" rx="0" stroke="#262626" stroke-width="1"/><path d="M229.5,72 H234.8 V77" fill="none" stroke="#262626" stroke-width="3.4" stroke-linecap="butt" stroke-linejoin="round"/><path d="M229.5,72 H234.8 V77" fill="none" stroke="#d6d6d6" stroke-width="2" stroke-linecap="butt" stroke-linejoin="round"/><g transform="translate(234,81.7) rotate(-38.7)"><ellipse cx="0" cy="0" rx="3.0" ry="2.325" fill="none" stroke="#262626" stroke-width="3.5"/><line x1="2.7" y1="0" x2="12.306502346320823" y2="0" stroke="#262626" stroke-width="3.5" stroke-linecap="round"/><line x1="11.006502346320822" y1="0" x2="11.006502346320822" y2="-2.9" stroke="#262626" stroke-width="2.6"/><line x1="8.506502346320822" y1="0" x2="8.506502346320822" y2="-2.4" stroke="#262626" stroke-width="2.6"/><ellipse cx="0" cy="0" rx="2.7" ry="2.0250000000000004" fill="none" stroke="#f2b33a" stroke-width="2.2"/><line x1="2.7" y1="0" x2="12.306502346320823" y2="0" stroke="#f2b33a" stroke-width="2.2" stroke-linecap="round"/><line x1="11.006502346320822" y1="0" x2="11.006502346320822" y2="-2.7" stroke="#f2b33a" stroke-width="1.4"/><line x1="8.506502346320822" y1="0" x2="8.506502346320822" y2="-2.2" stroke="#f2b33a" stroke-width="1.4"/></g><rect x="255.5" y="63.1" width="21.5" height="21.8" fill="none" stroke="#262626" stroke-width="3"/><rect x="255.5" y="63.1" width="21.5" height="21.8" fill="none" stroke="#d6d6d6" stroke-width="1.8" stroke-dasharray="4,2.4"/><rect x="254.6" y="75.8" width="9.6" height="10" fill="#d6d6d6" rx="0" stroke="#262626" stroke-width="1"/><path d="M264,72 H269 V77" fill="none" stroke="#262626" stroke-width="3.4" stroke-linecap="butt" stroke-linejoin="round"/><path d="M264,72 H269 V77" fill="none" stroke="#d6d6d6" stroke-width="2" stroke-linecap="butt" stroke-linejoin="round"/><rect x="272" y="66.2" width="6" height="19.6" fill="#262626" rx="0" /><path d="M277,67 V85 M272.5,67.2 H277 M274,71.8 H277 M272.5,76.3 H277 M274,80.8 H277 M272.5,85 H277" fill="none" stroke="#f2b33a" stroke-width="1.8" stroke-linecap="butt" stroke-linejoin="round"/><path d="M300.8,67.8 C303,61 313,61 311.5,68.5 C310.5,71 308,73 306.2,74.4" fill="none" stroke="#262626" stroke-width="4.0" stroke-linecap="round" stroke-linejoin="round"/><path d="M300.8,67.8 C303,61 313,61 311.5,68.5 C310.5,71 308,73 306.2,74.4" fill="none" stroke="#f2b33a" stroke-width="2.6" stroke-linecap="round" stroke-linejoin="round"/><line x1="289.5" y1="82.5" x2="311.5" y2="82.5" stroke="#262626" stroke-width="3.6" stroke-linecap="round"/><line x1="289.5" y1="82.5" x2="311.5" y2="82.5" stroke="#d6d6d6" stroke-width="2.2" stroke-linecap="round"/><rect x="297.2" y="79.2" width="7" height="6.6" fill="#bdbdbd" rx="0" stroke="#262626" stroke-width="1"/><rect x="299.8" y="81.7" width="1.8" height="1.8" fill="#eee" rx="0" /><path d="M323.5,63 C332,66 332,75 324.2,78 C322,80 324,84 330,85" fill="none" stroke="#262626" stroke-width="3.9" stroke-linecap="round" stroke-linejoin="round"/><path d="M323.5,63 C332,66 332,75 324.2,78 C322,80 324,84 330,85" fill="none" stroke="#d6d6d6" stroke-width="2.5" stroke-linecap="round" stroke-linejoin="round"/><polygon points="332.0,72.8 335.5,72.8 335.5,71.0 339.0,74.0 335.5,77.0 335.5,75.2 332.0,75.2" fill="#5ec4c4"  paint-order="stroke"/><path d="M340.3,62.5 C347,66 347,82 340.3,85.5" fill="none" stroke="#5ec4c4" stroke-width="2.3" stroke-linecap="round" stroke-linejoin="round"/><rect x="367.8" y="63.3" width="10.7" height="21.7" fill="#5ec4c4" rx="0" /><path d="M360,75.5 C361,71 363.5,68.5 366.5,69" fill="none" stroke="#262626" stroke-width="3.9" stroke-linecap="round" stroke-linejoin="round"/><path d="M360,75.5 C361,71 363.5,68.5 366.5,69" fill="none" stroke="#d6d6d6" stroke-width="2.5" stroke-linecap="round" stroke-linejoin="round"/><path d="M367.3,68.2 C369.5,74 371,80.6 373.4,80.6 C375.5,80.6 377,76 378.5,74.7" fill="none" stroke="#2a2a2a" stroke-width="1.8" stroke-linecap="round" stroke-linejoin="round"/><rect x="403.2" y="62.2" width="12.6" height="23.6" fill="#444" rx="0" stroke="#262626" stroke-width="1.3"/><path d="M403.7,69 C406.2,75 407.7,81 409.7,81 C411.7,81 413.2,77 415.2,75" fill="none" stroke="#2a2a2a" stroke-width="1.6" stroke-linecap="round" stroke-linejoin="round"/><path d="M394.2,75 C395.2,71 398.2,68.5 402.2,68.5" fill="none" stroke="#2a2a2a" stroke-width="3" stroke-linecap="round" stroke-linejoin="round"/><path d="M394.2,75 C395.2,71 398.2,68.5 402.2,68.5" fill="none" stroke="#555" stroke-width="1.4" stroke-linecap="round" stroke-linejoin="round"/><rect x="437.5" y="62.2" width="12.6" height="23.6" fill="#444" rx="0" stroke="#262626" stroke-width="1.3"/><path d="M438.0,69 C440.5,75 442.0,81 444.0,81 C446.0,81 447.5,77 449.5,75" fill="none" stroke="#2a2a2a" stroke-width="1.6" stroke-linecap="round" stroke-linejoin="round"/><path d="M428.5,75 C429.5,71 432.5,68.5 436.5,68.5" fill="none" stroke="#2a2a2a" stroke-width="3" stroke-linecap="round" stroke-linejoin="round"/><path d="M428.5,75 C429.5,71 432.5,68.5 436.5,68.5" fill="none" stroke="#555" stroke-width="1.4" stroke-linecap="round" stroke-linejoin="round"/><rect x="471.5" y="62.2" width="12.6" height="23.6" fill="#505050" rx="0" stroke="#262626" stroke-width="1.3"/><path d="M472.0,69 C474.5,75 476.0,81 478.0,81 C480.0,81 481.5,77 483.5,75" fill="none" stroke="#2a2a2a" stroke-width="1.6" stroke-linecap="round" stroke-linejoin="round"/><path d="M462.5,75 C463.5,71 466.5,68.5 470.5,68.5" fill="none" stroke="#2a2a2a" stroke-width="3" stroke-linecap="round" stroke-linejoin="round"/><path d="M462.5,75 C463.5,71 466.5,68.5 470.5,68.5" fill="none" stroke="#555" stroke-width="1.4" stroke-linecap="round" stroke-linejoin="round"/><path d="M391,81.5 L394,78 L394,85 Z M396,78 L399,81.5 L396,85 Z" fill="none" stroke="#2a2a2a" stroke-width="1.2" stroke-linecap="round" stroke-linejoin="round"/><path d="M426,79 L430,76.5 L434,79 Z M426,82 L430,84.5 L434,82 Z" fill="none" stroke="#2a2a2a" stroke-width="1.2" stroke-linecap="round" stroke-linejoin="round"/><path d="M459.5,80 L463,84 L470,75" fill="none" stroke="#2a2a2a" stroke-width="1.8" stroke-linecap="round" stroke-linejoin="round"/><rect x="493.7" y="61.8" width="8.8" height="13.2" fill="#5ec4c4" rx="0" /><polygon points="503,62.3 517.9,75.5 511,75.8 514.6,84 511,85.5 507.6,77.7 503,82" fill="#d6d6d6" stroke="#262626" stroke-width="1.2" stroke-linejoin="round" paint-order="stroke"/><rect x="527" y="60" width="1" height="29" fill="#5c5c5c"/><rect x="529" y="61" width="1" height="29" fill="#5c5c5c"/><rect x="527" y="60" width="1" height="1" fill="#a8a8a8"/><rect x="529" y="61" width="1" height="1" fill="#a8a8a8"/><rect x="527" y="62" width="1" height="1" fill="#a8a8a8"/><rect x="529" y="63" width="1" height="1" fill="#a8a8a8"/><rect x="527" y="64" width="1" height="1" fill="#a8a8a8"/><rect x="529" y="65" width="1" height="1" fill="#a8a8a8"/><rect x="527" y="66" width="1" height="1" fill="#a8a8a8"/><rect x="529" y="67" width="1" height="1" fill="#a8a8a8"/><rect x="527" y="68" width="1" height="1" fill="#a8a8a8"/><rect x="529" y="69" width="1" height="1" fill="#a8a8a8"/><rect x="527" y="70" width="1" height="1" fill="#a8a8a8"/><rect x="529" y="71" width="1" height="1" fill="#a8a8a8"/><rect x="527" y="72" width="1" height="1" fill="#a8a8a8"/><rect x="529" y="73" width="1" height="1" fill="#a8a8a8"/><rect x="527" y="74" width="1" height="1" fill="#a8a8a8"/><rect x="529" y="75" width="1" height="1" fill="#a8a8a8"/><rect x="527" y="76" width="1" height="1" fill="#a8a8a8"/><rect x="529" y="77" width="1" height="1" fill="#a8a8a8"/><rect x="527" y="78" width="1" height="1" fill="#a8a8a8"/><rect x="529" y="79" width="1" height="1" fill="#a8a8a8"/><rect x="527" y="80" width="1" height="1" fill="#a8a8a8"/><rect x="529" y="81" width="1" height="1" fill="#a8a8a8"/><rect x="527" y="82" width="1" height="1" fill="#a8a8a8"/><rect x="529" y="83" width="1" height="1" fill="#a8a8a8"/><rect x="527" y="84" width="1" height="1" fill="#a8a8a8"/><rect x="529" y="85" width="1" height="1" fill="#a8a8a8"/><rect x="527" y="86" width="1" height="1" fill="#a8a8a8"/><rect x="529" y="87" width="1" height="1" fill="#a8a8a8"/><rect x="527" y="88" width="1" height="1" fill="#a8a8a8"/><rect x="529" y="89" width="1" height="1" fill="#a8a8a8"/><polygon points="547.8,64.85 552.7,64.85 552.7,62.6 557.6,67.1 552.7,71.6 552.7,69.35 547.8,69.35" fill="#5ec4c4"  paint-order="stroke"/><g transform="translate(541.7,82.5) rotate(-43.6)"><ellipse cx="0" cy="0" rx="3.0" ry="2.325" fill="none" stroke="#262626" stroke-width="3.5"/><line x1="2.7" y1="0" x2="14.217243052012545" y2="0" stroke="#262626" stroke-width="3.5" stroke-linecap="round"/><line x1="12.917243052012545" y1="0" x2="12.917243052012545" y2="-2.9" stroke="#262626" stroke-width="2.6"/><line x1="10.417243052012545" y1="0" x2="10.417243052012545" y2="-2.4" stroke="#262626" stroke-width="2.6"/><ellipse cx="0" cy="0" rx="2.7" ry="2.0250000000000004" fill="none" stroke="#d6d6d6" stroke-width="2.2"/><line x1="2.7" y1="0" x2="14.217243052012545" y2="0" stroke="#d6d6d6" stroke-width="2.2" stroke-linecap="round"/><line x1="12.917243052012545" y1="0" x2="12.917243052012545" y2="-2.7" stroke="#d6d6d6" stroke-width="1.4"/><line x1="10.417243052012545" y1="0" x2="10.417243052012545" y2="-2.2" stroke="#d6d6d6" stroke-width="1.4"/></g><g transform="translate(552.3,82.5) rotate(-45.9)"><ellipse cx="0" cy="0" rx="3.0" ry="2.325" fill="none" stroke="#262626" stroke-width="3.5"/><line x1="2.7" y1="0" x2="13.648809471891676" y2="0" stroke="#262626" stroke-width="3.5" stroke-linecap="round"/><line x1="12.348809471891675" y1="0" x2="12.348809471891675" y2="-2.9" stroke="#262626" stroke-width="2.6"/><line x1="9.848809471891677" y1="0" x2="9.848809471891677" y2="-2.4" stroke="#262626" stroke-width="2.6"/><ellipse cx="0" cy="0" rx="2.7" ry="2.0250000000000004" fill="none" stroke="#5ec4c4" stroke-width="2.2"/><line x1="2.7" y1="0" x2="13.648809471891676" y2="0" stroke="#5ec4c4" stroke-width="2.2" stroke-linecap="round"/><line x1="12.348809471891675" y1="0" x2="12.348809471891675" y2="-2.7" stroke="#5ec4c4" stroke-width="1.4"/><line x1="9.848809471891677" y1="0" x2="9.848809471891677" y2="-2.2" stroke="#5ec4c4" stroke-width="1.4"/></g><rect x="573.8" y="64.39999999999999" width="6.4" height="6.4" fill="#262626" stroke="#262626" stroke-width="1.5"/><rect x="574.5999999999999" y="65.19999999999999" width="4.800000000000001" height="4.800000000000001" fill="#3a3a3a" stroke="#5ec4c4" stroke-width="1.6"/><rect x="576.1" y="66.69999999999999" width="1.8" height="1.8" fill="#e8e8e8"/><rect x="573.8" y="77.2" width="6.4" height="6.4" fill="#262626" stroke="#262626" stroke-width="1.5"/><rect x="574.5999999999999" y="78.0" width="4.800000000000001" height="4.800000000000001" fill="#3a3a3a" stroke="#5ec4c4" stroke-width="1.6"/><rect x="576.1" y="79.5" width="1.8" height="1.8" fill="#e8e8e8"/><polygon points="587.25,72.1 587.25,67.2 584.5,67.2 589.5,62.3 594.5,67.2 591.75,67.2 591.75,72.1" fill="#d6d6d6" stroke="#262626" stroke-width="1.2" stroke-linejoin="round" paint-order="stroke"/><polygon points="591.75,76.1 591.75,81.0 594.5,81.0 589.5,85.9 584.5,81.0 587.25,81.0 587.25,76.1" fill="#d6d6d6" stroke="#262626" stroke-width="1.2" stroke-linejoin="round" paint-order="stroke"/><rect x="606" y="60" width="1" height="29" fill="#5c5c5c"/><rect x="608" y="61" width="1" height="29" fill="#5c5c5c"/><rect x="606" y="60" width="1" height="1" fill="#a8a8a8"/><rect x="608" y="61" width="1" height="1" fill="#a8a8a8"/><rect x="606" y="62" width="1" height="1" fill="#a8a8a8"/><rect x="608" y="63" width="1" height="1" fill="#a8a8a8"/><rect x="606" y="64" width="1" height="1" fill="#a8a8a8"/><rect x="608" y="65" width="1" height="1" fill="#a8a8a8"/><rect x="606" y="66" width="1" height="1" fill="#a8a8a8"/><rect x="608" y="67" width="1" height="1" fill="#a8a8a8"/><rect x="606" y="68" width="1" height="1" fill="#a8a8a8"/><rect x="608" y="69" width="1" height="1" fill="#a8a8a8"/><rect x="606" y="70" width="1" height="1" fill="#a8a8a8"/><rect x="608" y="71" width="1" height="1" fill="#a8a8a8"/><rect x="606" y="72" width="1" height="1" fill="#a8a8a8"/><rect x="608" y="73" width="1" height="1" fill="#a8a8a8"/><rect x="606" y="74" width="1" height="1" fill="#a8a8a8"/><rect x="608" y="75" width="1" height="1" fill="#a8a8a8"/><rect x="606" y="76" width="1" height="1" fill="#a8a8a8"/><rect x="608" y="77" width="1" height="1" fill="#a8a8a8"/><rect x="606" y="78" width="1" height="1" fill="#a8a8a8"/><rect x="608" y="79" width="1" height="1" fill="#a8a8a8"/><rect x="606" y="80" width="1" height="1" fill="#a8a8a8"/><rect x="608" y="81" width="1" height="1" fill="#a8a8a8"/><rect x="606" y="82" width="1" height="1" fill="#a8a8a8"/><rect x="608" y="83" width="1" height="1" fill="#a8a8a8"/><rect x="606" y="84" width="1" height="1" fill="#a8a8a8"/><rect x="608" y="85" width="1" height="1" fill="#a8a8a8"/><rect x="606" y="86" width="1" height="1" fill="#a8a8a8"/><rect x="608" y="87" width="1" height="1" fill="#a8a8a8"/><rect x="606" y="88" width="1" height="1" fill="#a8a8a8"/><rect x="608" y="89" width="1" height="1" fill="#a8a8a8"/><path d="M618.2,85 C619,78 623,74.5 626,73.5" fill="none" stroke="#262626" stroke-width="3.8" stroke-linecap="round" stroke-linejoin="round"/><path d="M618.2,85 C619,78 623,74.5 626,73.5" fill="none" stroke="#d6d6d6" stroke-width="2.4" stroke-linecap="round" stroke-linejoin="round"/><path d="M632.5,73.5 C635.5,74.5 639.3,78 640,85" fill="none" stroke="#262626" stroke-width="3.8" stroke-linecap="round" stroke-linejoin="round"/><path d="M632.5,73.5 C635.5,74.5 639.3,78 640,85" fill="none" stroke="#d6d6d6" stroke-width="2.4" stroke-linecap="round" stroke-linejoin="round"/><rect x="626" y="70.7" width="6.2" height="6.1" fill="#3a3a3a" rx="0" /><rect x="626.5" y="71.2" width="5.4" height="5.4" fill="none" stroke="#d6d6d6" stroke-width="1.5"/><rect x="628.3" y="73" width="1.8" height="1.8" fill="#eee" rx="0" /><polygon points="633.45,72.1 633.45,67.2 630.7,67.2 635.7,62.3 640.7,67.2 637.95,67.2 637.95,72.1" fill="#5ec4c4"  paint-order="stroke"/><path d="M652.5,62.5 C655.5,65 656.5,68 656.5,70.5" fill="none" stroke="#262626" stroke-width="3.6" stroke-linecap="round" stroke-linejoin="round"/><path d="M652.5,62.5 C655.5,65 656.5,68 656.5,70.5" fill="none" stroke="#d6d6d6" stroke-width="2.2" stroke-linecap="round" stroke-linejoin="round"/><path d="M656.5,77 C656.5,79.5 655.5,83 652.5,85.5" fill="none" stroke="#262626" stroke-width="3.6" stroke-linecap="round" stroke-linejoin="round"/><path d="M656.5,77 C656.5,79.5 655.5,83 652.5,85.5" fill="none" stroke="#d6d6d6" stroke-width="2.2" stroke-linecap="round" stroke-linejoin="round"/><rect x="653.2" y="70.8" width="5.6" height="5.6" fill="#2e2e2e" stroke="#d6d6d6" stroke-width="1.5"/><rect x="655.1" y="72.7" width="1.8" height="1.8" fill="#eee" rx="0" /><path d="M663.5,62.5 V86" fill="none" stroke="#d6d6d6" stroke-width="2.2" stroke-linecap="butt" stroke-linejoin="round"/><rect x="662" y="66.7" width="3" height="1.2" fill="#3a3a3a" rx="0" /><rect x="662" y="72.8" width="3" height="1.2" fill="#3a3a3a" rx="0" /><rect x="662" y="78.9" width="3" height="1.2" fill="#3a3a3a" rx="0" /><path d="M674.3,62.5 C671.3,65 670.3,68 670.3,70.5" fill="none" stroke="#5ec4c4" stroke-width="2.2" stroke-linecap="round" stroke-linejoin="round"/><path d="M670.3,77 C670.3,79.5 671.3,83 674.3,85.5" fill="none" stroke="#5ec4c4" stroke-width="2.2" stroke-linecap="round" stroke-linejoin="round"/><rect x="668.2" y="70.8" width="5.6" height="5.6" fill="#2e2e2e" stroke="#5ec4c4" stroke-width="1.5"/><rect x="670.1" y="72.7" width="1.8" height="1.8" fill="#eee" rx="0" /><path d="M686.5,62.3 C687,67 690,71.5 694.5,73.5" fill="none" stroke="#262626" stroke-width="3.8" stroke-linecap="round" stroke-linejoin="round"/><path d="M686.5,62.3 C687,67 690,71.5 694.5,73.5" fill="none" stroke="#d6d6d6" stroke-width="2.4" stroke-linecap="round" stroke-linejoin="round"/><path d="M700.5,73.5 C705,71.5 707.5,67 708.3,62.3" fill="none" stroke="#262626" stroke-width="3.8" stroke-linecap="round" stroke-linejoin="round"/><path d="M700.5,73.5 C705,71.5 707.5,67 708.3,62.3" fill="none" stroke="#d6d6d6" stroke-width="2.4" stroke-linecap="round" stroke-linejoin="round"/><rect x="694.6" y="71" width="5.6" height="5.6" fill="#3a3a3a" stroke="#d6d6d6" stroke-width="1.5"/><rect x="696.5" y="72.9" width="1.8" height="1.8" fill="#eee" rx="0" /><polygon points="706.15,75.9 706.15,80.8 708.9,80.8 703.9,85.7 698.9,80.8 701.65,80.8 701.65,75.9" fill="#5ec4c4"  paint-order="stroke"/><rect x="719" y="60" width="1" height="29" fill="#5c5c5c"/><rect x="721" y="61" width="1" height="29" fill="#5c5c5c"/><rect x="719" y="60" width="1" height="1" fill="#a8a8a8"/><rect x="721" y="61" width="1" height="1" fill="#a8a8a8"/><rect x="719" y="62" width="1" height="1" fill="#a8a8a8"/><rect x="721" y="63" width="1" height="1" fill="#a8a8a8"/><rect x="719" y="64" width="1" height="1" fill="#a8a8a8"/><rect x="721" y="65" width="1" height="1" fill="#a8a8a8"/><rect x="719" y="66" width="1" height="1" fill="#a8a8a8"/><rect x="721" y="67" width="1" height="1" fill="#a8a8a8"/><rect x="719" y="68" width="1" height="1" fill="#a8a8a8"/><rect x="721" y="69" width="1" height="1" fill="#a8a8a8"/><rect x="719" y="70" width="1" height="1" fill="#a8a8a8"/><rect x="721" y="71" width="1" height="1" fill="#a8a8a8"/><rect x="719" y="72" width="1" height="1" fill="#a8a8a8"/><rect x="721" y="73" width="1" height="1" fill="#a8a8a8"/><rect x="719" y="74" width="1" height="1" fill="#a8a8a8"/><rect x="721" y="75" width="1" height="1" fill="#a8a8a8"/><rect x="719" y="76" width="1" height="1" fill="#a8a8a8"/><rect x="721" y="77" width="1" height="1" fill="#a8a8a8"/><rect x="719" y="78" width="1" height="1" fill="#a8a8a8"/><rect x="721" y="79" width="1" height="1" fill="#a8a8a8"/><rect x="719" y="80" width="1" height="1" fill="#a8a8a8"/><rect x="721" y="81" width="1" height="1" fill="#a8a8a8"/><rect x="719" y="82" width="1" height="1" fill="#a8a8a8"/><rect x="721" y="83" width="1" height="1" fill="#a8a8a8"/><rect x="719" y="84" width="1" height="1" fill="#a8a8a8"/><rect x="721" y="85" width="1" height="1" fill="#a8a8a8"/><rect x="719" y="86" width="1" height="1" fill="#a8a8a8"/><rect x="721" y="87" width="1" height="1" fill="#a8a8a8"/><rect x="719" y="88" width="1" height="1" fill="#a8a8a8"/><rect x="721" y="89" width="1" height="1" fill="#a8a8a8"/><polygon points="730.7,67.5 736,62.1 736,65.3 749,65.3 749,62.1 754.3,67.5 749,72.9 749,69.7 736,69.7 736,72.9" fill="#d6d6d6" stroke="#262626" stroke-width="1.2" stroke-linejoin="round" paint-order="stroke"/><g transform="translate(744.6,82.2) rotate(-43.7)"><ellipse cx="0" cy="0" rx="3.0" ry="2.325" fill="none" stroke="#262626" stroke-width="3.5"/><line x1="2.7" y1="0" x2="12.731064370271588" y2="0" stroke="#262626" stroke-width="3.5" stroke-linecap="round"/><line x1="11.431064370271587" y1="0" x2="11.431064370271587" y2="-2.9" stroke="#262626" stroke-width="2.6"/><line x1="8.931064370271589" y1="0" x2="8.931064370271589" y2="-2.4" stroke="#262626" stroke-width="2.6"/><ellipse cx="0" cy="0" rx="2.7" ry="2.0250000000000004" fill="none" stroke="#f2b33a" stroke-width="2.2"/><line x1="2.7" y1="0" x2="12.731064370271588" y2="0" stroke="#f2b33a" stroke-width="2.2" stroke-linecap="round"/><line x1="11.431064370271587" y1="0" x2="11.431064370271587" y2="-2.7" stroke="#f2b33a" stroke-width="1.4"/><line x1="8.931064370271589" y1="0" x2="8.931064370271589" y2="-2.2" stroke="#f2b33a" stroke-width="1.4"/></g><line x1="765" y1="65.2" x2="788.5" y2="65.2" stroke="#262626" stroke-width="3.0" stroke-linecap="round"/><line x1="765" y1="65.2" x2="788.5" y2="65.2" stroke="#d6d6d6" stroke-width="1.6" stroke-linecap="round"/><rect x="766.5" y="61.6" width="2.4" height="7.2" fill="#5ec4c4" rx="0" stroke="#262626" stroke-width="0.8"/><rect x="775.1999999999999" y="61.6" width="2.4" height="7.2" fill="#5ec4c4" rx="0" stroke="#262626" stroke-width="0.8"/><rect x="784.0" y="61.6" width="2.4" height="7.2" fill="#5ec4c4" rx="0" stroke="#262626" stroke-width="0.8"/><polygon points="766.1,80.4 771.5,75 771.5,78.3 781.8,78.3 781.8,75 787.2,80.4 781.8,85.8 781.8,82.5 771.5,82.5 771.5,85.8" fill="#5ec4c4"  paint-order="stroke"/><path d="M799.8,62.7 C801,67 805,69.5 810.8,69.5 C816.5,69.5 820.5,67 821.8,62.7" fill="none" stroke="#262626" stroke-width="3.6" stroke-linecap="round" stroke-linejoin="round"/><path d="M799.8,62.7 C801,67 805,69.5 810.8,69.5 C816.5,69.5 820.5,67 821.8,62.7" fill="none" stroke="#d6d6d6" stroke-width="2.2" stroke-linecap="round" stroke-linejoin="round"/><polygon points="812.85,72.0 812.85,76.6 815.85,76.6 810.6,81.2 805.35,76.6 808.35,76.6 808.35,72.0" fill="#5ec4c4"  paint-order="stroke"/><rect x="799" y="83.5" width="23.7" height="2.6" fill="#5ec4c4" rx="0" /><polygon points="842.7,65.25 847.6,65.25 847.6,62.25 852.5,67.5 847.6,72.75 847.6,69.75 842.7,69.75" fill="#5ec4c4"  paint-order="stroke"/><line x1="834" y1="82.2" x2="856.5" y2="82.2" stroke="#262626" stroke-width="3.0" stroke-linecap="round"/><line x1="834" y1="82.2" x2="856.5" y2="82.2" stroke="#d6d6d6" stroke-width="1.6" stroke-linecap="round"/><rect x="835.5" y="78.5" width="2.2" height="7.4" fill="#d6d6d6" rx="0" stroke="#262626" stroke-width="0.8"/><rect x="845.6999999999999" y="78.5" width="2.2" height="7.4" fill="#5ec4c4" rx="0" stroke="#262626" stroke-width="0.8"/><rect x="852.4" y="78.5" width="2.2" height="7.4" fill="#5ec4c4" rx="0" stroke="#262626" stroke-width="0.8"/><polygon points="866.65,73.75 871.5,73.75 871.5,71.4 876.35,76.0 871.5,80.6 871.5,78.25 866.65,78.25" fill="#d6d6d6" stroke="#262626" stroke-width="1.2" stroke-linejoin="round" paint-order="stroke"/><g transform="translate(880.6,71.9) rotate(-43.5)"><ellipse cx="0" cy="0" rx="3.0" ry="2.325" fill="none" stroke="#262626" stroke-width="3.5"/><line x1="2.7" y1="0" x2="13.368993978605822" y2="0" stroke="#262626" stroke-width="3.5" stroke-linecap="round"/><line x1="12.068993978605821" y1="0" x2="12.068993978605821" y2="-2.9" stroke="#262626" stroke-width="2.6"/><line x1="9.568993978605821" y1="0" x2="9.568993978605821" y2="-2.4" stroke="#262626" stroke-width="2.6"/><ellipse cx="0" cy="0" rx="2.7" ry="2.0250000000000004" fill="none" stroke="#d6d6d6" stroke-width="2.2"/><line x1="2.7" y1="0" x2="13.368993978605822" y2="0" stroke="#d6d6d6" stroke-width="2.2" stroke-linecap="round"/><line x1="12.068993978605821" y1="0" x2="12.068993978605821" y2="-2.7" stroke="#d6d6d6" stroke-width="1.4"/><line x1="9.568993978605821" y1="0" x2="9.568993978605821" y2="-2.2" stroke="#d6d6d6" stroke-width="1.4"/></g><g transform="translate(880.6,81.7) rotate(-41.9)"><ellipse cx="0" cy="0" rx="3.0" ry="2.325" fill="none" stroke="#262626" stroke-width="3.5"/><line x1="2.7" y1="0" x2="13.029965464267306" y2="0" stroke="#262626" stroke-width="3.5" stroke-linecap="round"/><line x1="11.729965464267305" y1="0" x2="11.729965464267305" y2="-2.9" stroke="#262626" stroke-width="2.6"/><line x1="9.229965464267305" y1="0" x2="9.229965464267305" y2="-2.4" stroke="#262626" stroke-width="2.6"/><ellipse cx="0" cy="0" rx="2.7" ry="2.0250000000000004" fill="none" stroke="#d6d6d6" stroke-width="2.2"/><line x1="2.7" y1="0" x2="13.029965464267306" y2="0" stroke="#d6d6d6" stroke-width="2.2" stroke-linecap="round"/><line x1="11.729965464267305" y1="0" x2="11.729965464267305" y2="-2.7" stroke="#d6d6d6" stroke-width="1.4"/><line x1="9.229965464267305" y1="0" x2="9.229965464267305" y2="-2.2" stroke="#d6d6d6" stroke-width="1.4"/></g><path d="M901.5,67.5 V62.5 H906.5 M919.5,62.5 H924.5 V67.5 M924.5,80 V85 H919.5 M906.5,85 H901.5 V80" fill="none" stroke="#262626" stroke-width="3.4" stroke-linecap="butt" stroke-linejoin="round"/><path d="M901.5,67.5 V62.5 H906.5 M919.5,62.5 H924.5 V67.5 M924.5,80 V85 H919.5 M906.5,85 H901.5 V80" fill="none" stroke="#d6d6d6" stroke-width="2" stroke-linecap="butt" stroke-linejoin="round"/><rect x="904.7" y="70.9" width="2.1" height="6.1" fill="#5ec4c4" rx="0" /><rect x="911.9" y="70.9" width="2.1" height="6.1" fill="#5ec4c4" rx="0" /><rect x="919.6" y="70.9" width="2.1" height="6.1" fill="#5ec4c4" rx="0" /><polygon points="943.15,61.6 943.15,65.7 945.9,65.7 940.9,69.8 935.9,65.7 938.65,65.7 938.65,61.6" fill="#5ec4c4"  paint-order="stroke"/><polygon points="951.55,85.8 951.55,81.9 948.8,81.9 953.8,78.0 958.8,81.9 956.05,81.9 956.05,85.8" fill="#5ec4c4"  paint-order="stroke"/><line x1="936.5" y1="80.6" x2="958.5" y2="66.8" stroke="#262626" stroke-width="3.0" stroke-linecap="round"/><line x1="936.5" y1="80.6" x2="958.5" y2="66.8" stroke="#d6d6d6" stroke-width="1.6" stroke-linecap="round"/><rect x="937.5" y="75.5" width="2.2" height="7" fill="#5ec4c4" rx="0" /><rect x="946.3" y="70.0" width="2.2" height="7" fill="#5ec4c4" rx="0" /><rect x="955.0" y="64.5" width="2.2" height="7" fill="#5ec4c4" rx="0" /><path d="M988,66.2 C993,66.5 993.5,76 988,77.5 L980,77.5 M980,66 L976,66 C969.5,66 969.5,77.5 976,77.5" fill="none" stroke="#262626" stroke-width="4.4" stroke-linecap="round" stroke-linejoin="round"/><path d="M988,66.2 C993,66.5 993.5,76 988,77.5 L980,77.5 M980,66 L976,66 C969.5,66 969.5,77.5 976,77.5" fill="none" stroke="#d6d6d6" stroke-width="3" stroke-linecap="round" stroke-linejoin="round"/><polygon points="980,62.5 986,66 980,69.5" fill="#d6d6d6"  paint-order="stroke"/><polygon points="982,74 976,77.5 982,81" fill="#d6d6d6"  paint-order="stroke"/><g transform="translate(983.3,81.7) rotate(-41.7)"><ellipse cx="0" cy="0" rx="3.0" ry="2.325" fill="none" stroke="#262626" stroke-width="3.5"/><line x1="2.7" y1="0" x2="12.46515142306748" y2="0" stroke="#262626" stroke-width="3.5" stroke-linecap="round"/><line x1="11.16515142306748" y1="0" x2="11.16515142306748" y2="-2.9" stroke="#262626" stroke-width="2.6"/><line x1="8.665151423067481" y1="0" x2="8.665151423067481" y2="-2.4" stroke="#262626" stroke-width="2.6"/><ellipse cx="0" cy="0" rx="2.7" ry="2.0250000000000004" fill="none" stroke="#f2b33a" stroke-width="2.2"/><line x1="2.7" y1="0" x2="12.46515142306748" y2="0" stroke="#f2b33a" stroke-width="2.2" stroke-linecap="round"/><line x1="11.16515142306748" y1="0" x2="11.16515142306748" y2="-2.7" stroke="#f2b33a" stroke-width="1.4"/><line x1="8.665151423067481" y1="0" x2="8.665151423067481" y2="-2.2" stroke="#f2b33a" stroke-width="1.4"/></g><rect x="1003" y="60" width="1" height="29" fill="#5c5c5c"/><rect x="1005" y="61" width="1" height="29" fill="#5c5c5c"/><rect x="1003" y="60" width="1" height="1" fill="#a8a8a8"/><rect x="1005" y="61" width="1" height="1" fill="#a8a8a8"/><rect x="1003" y="62" width="1" height="1" fill="#a8a8a8"/><rect x="1005" y="63" width="1" height="1" fill="#a8a8a8"/><rect x="1003" y="64" width="1" height="1" fill="#a8a8a8"/><rect x="1005" y="65" width="1" height="1" fill="#a8a8a8"/><rect x="1003" y="66" width="1" height="1" fill="#a8a8a8"/><rect x="1005" y="67" width="1" height="1" fill="#a8a8a8"/><rect x="1003" y="68" width="1" height="1" fill="#a8a8a8"/><rect x="1005" y="69" width="1" height="1" fill="#a8a8a8"/><rect x="1003" y="70" width="1" height="1" fill="#a8a8a8"/><rect x="1005" y="71" width="1" height="1" fill="#a8a8a8"/><rect x="1003" y="72" width="1" height="1" fill="#a8a8a8"/><rect x="1005" y="73" width="1" height="1" fill="#a8a8a8"/><rect x="1003" y="74" width="1" height="1" fill="#a8a8a8"/><rect x="1005" y="75" width="1" height="1" fill="#a8a8a8"/><rect x="1003" y="76" width="1" height="1" fill="#a8a8a8"/><rect x="1005" y="77" width="1" height="1" fill="#a8a8a8"/><rect x="1003" y="78" width="1" height="1" fill="#a8a8a8"/><rect x="1005" y="79" width="1" height="1" fill="#a8a8a8"/><rect x="1003" y="80" width="1" height="1" fill="#a8a8a8"/><rect x="1005" y="81" width="1" height="1" fill="#a8a8a8"/><rect x="1003" y="82" width="1" height="1" fill="#a8a8a8"/><rect x="1005" y="83" width="1" height="1" fill="#a8a8a8"/><rect x="1003" y="84" width="1" height="1" fill="#a8a8a8"/><rect x="1005" y="85" width="1" height="1" fill="#a8a8a8"/><rect x="1003" y="86" width="1" height="1" fill="#a8a8a8"/><rect x="1005" y="87" width="1" height="1" fill="#a8a8a8"/><rect x="1003" y="88" width="1" height="1" fill="#a8a8a8"/><rect x="1005" y="89" width="1" height="1" fill="#a8a8a8"/><rect x="1022.6" y="62.00000000000001" width="6.8" height="6.8" fill="#262626" stroke="#262626" stroke-width="1.5"/><rect x="1023.4" y="62.800000000000004" width="5.199999999999999" height="5.199999999999999" fill="#3a3a3a" stroke="#5ec4c4" stroke-width="1.6"/><rect x="1025.1" y="64.5" width="1.8" height="1.8" fill="#e8e8e8"/><circle cx="1016.7" cy="65.4" r="2.2" fill="#5ec4c4" /><circle cx="1036.1" cy="65.4" r="2.2" fill="#5ec4c4" /><circle cx="1020.9" cy="65.4" r="1" fill="#5ec4c4" /><circle cx="1031.5" cy="65.4" r="1" fill="#5ec4c4" /><path d="M1021,68.8 C1021,78 1019,83 1015,85.2" fill="none" stroke="#262626" stroke-width="3.6" stroke-linecap="round" stroke-linejoin="round"/><path d="M1021,68.8 C1021,78 1019,83 1015,85.2" fill="none" stroke="#d6d6d6" stroke-width="2.2" stroke-linecap="round" stroke-linejoin="round"/><path d="M1031.3,68.8 C1031.3,78 1033.5,83 1037.4,85.2" fill="none" stroke="#262626" stroke-width="3.6" stroke-linecap="round" stroke-linejoin="round"/><path d="M1031.3,68.8 C1031.3,78 1033.5,83 1037.4,85.2" fill="none" stroke="#d6d6d6" stroke-width="2.2" stroke-linecap="round" stroke-linejoin="round"/><text x="1021.6" y="86" font-size="12.5" font-weight="bold" fill="#5ec4c4" font-family="Liberation Sans">A</text><polygon points="1042.7,85.5 1042.7,90 1038.2,90" fill="#d6d6d6"  paint-order="stroke"/><rect x="1057.0" y="62.00000000000001" width="6.8" height="6.8" fill="#262626" stroke="#262626" stroke-width="1.5"/><rect x="1057.8" y="62.800000000000004" width="5.199999999999999" height="5.199999999999999" fill="#3a3a3a" stroke="#5ec4c4" stroke-width="1.6"/><rect x="1059.5" y="64.5" width="1.8" height="1.8" fill="#e8e8e8"/><circle cx="1066.4" cy="65.4" r="1" fill="#5ec4c4" /><circle cx="1070" cy="65.4" r="2.2" fill="#5ec4c4" /><line x1="1051.1" y1="72" x2="1055.8" y2="66.6" stroke="#5ec4c4" stroke-width="1.6" stroke-linecap="round"/><circle cx="1051.1" cy="72.2" r="2.2" fill="#5ec4c4" /><path d="M1059.6,68.8 C1059.6,78 1055,83 1049.3,85.2" fill="none" stroke="#262626" stroke-width="3.6" stroke-linecap="round" stroke-linejoin="round"/><path d="M1059.6,68.8 C1059.6,78 1055,83 1049.3,85.2" fill="none" stroke="#d6d6d6" stroke-width="2.2" stroke-linecap="round" stroke-linejoin="round"/><path d="M1065.4,68.8 C1066,78 1068,83 1071.4,85.2" fill="none" stroke="#262626" stroke-width="3.6" stroke-linecap="round" stroke-linejoin="round"/><path d="M1065.4,68.8 C1066,78 1068,83 1071.4,85.2" fill="none" stroke="#d6d6d6" stroke-width="2.2" stroke-linecap="round" stroke-linejoin="round"/><polygon points="1076.7,85.5 1076.7,90 1072.2,90" fill="#d6d6d6"  paint-order="stroke"/><rect x="1082.5" y="62.00000000000001" width="6.8" height="6.8" fill="#262626" stroke="#262626" stroke-width="1.5"/><rect x="1083.3" y="62.800000000000004" width="5.199999999999999" height="5.199999999999999" fill="#3a3a3a" stroke="#5ec4c4" stroke-width="1.6"/><rect x="1085.0" y="64.5" width="1.8" height="1.8" fill="#e8e8e8"/><path d="M1087.2,69.8 C1090,78 1096,84.5 1105.7,85.2" fill="none" stroke="#262626" stroke-width="3.6999999999999997" stroke-linecap="round" stroke-linejoin="round"/><path d="M1087.2,69.8 C1090,78 1096,84.5 1105.7,85.2" fill="none" stroke="#d6d6d6" stroke-width="2.3" stroke-linecap="round" stroke-linejoin="round"/><polygon points="1111,85.5 1111,90 1106.5,90" fill="#d6d6d6"  paint-order="stroke"/><rect x="1116.8999999999999" y="61.800000000000004" width="6.8" height="6.8" fill="#262626" stroke="#262626" stroke-width="1.5"/><rect x="1117.6999999999998" y="62.6" width="5.199999999999999" height="5.199999999999999" fill="#3a3a3a" stroke="#5ec4c4" stroke-width="1.6"/><rect x="1119.3999999999999" y="64.3" width="1.8" height="1.8" fill="#e8e8e8"/><path d="M1124.5,66.2 C1133,67 1139,76 1139.6,85.2" fill="none" stroke="#262626" stroke-width="3.6999999999999997" stroke-linecap="round" stroke-linejoin="round"/><path d="M1124.5,66.2 C1133,67 1139,76 1139.6,85.2" fill="none" stroke="#d6d6d6" stroke-width="2.3" stroke-linecap="round" stroke-linejoin="round"/><polygon points="1145,85.5 1145,90 1140.5,90" fill="#d6d6d6"  paint-order="stroke"/><rect x="1160.6" y="61.800000000000004" width="6.8" height="6.8" fill="#262626" stroke="#262626" stroke-width="1.5"/><rect x="1161.3999999999999" y="62.6" width="5.199999999999999" height="5.199999999999999" fill="#3a3a3a" stroke="#5ec4c4" stroke-width="1.6"/><rect x="1163.1" y="64.3" width="1.8" height="1.8" fill="#e8e8e8"/><line x1="1168.8" y1="65.2" x2="1172.5" y2="65.2" stroke="#262626" stroke-width="3.4" stroke-linecap="butt"/><line x1="1168.8" y1="65.2" x2="1172.5" y2="65.2" stroke="#d6d6d6" stroke-width="2" stroke-linecap="butt"/><path d="M1164,69 V82.5 H1160.8" fill="none" stroke="#262626" stroke-width="3.4" stroke-linecap="butt" stroke-linejoin="round"/><path d="M1164,69 V82.5 H1160.8" fill="none" stroke="#d6d6d6" stroke-width="2" stroke-linecap="butt" stroke-linejoin="round"/><rect x="1153.3999999999999" y="78.8" width="6.8" height="6.8" fill="#262626" stroke="#262626" stroke-width="1.5"/><rect x="1154.1999999999998" y="79.6" width="5.199999999999999" height="5.199999999999999" fill="#3a3a3a" stroke="#5ec4c4" stroke-width="1.6"/><rect x="1155.8999999999999" y="81.3" width="1.8" height="1.8" fill="#e8e8e8"/><polygon points="1178.9,85.5 1178.9,90 1174.4,90" fill="#d6d6d6"  paint-order="stroke"/><rect x="1185.1999999999998" y="61.800000000000004" width="6.8" height="6.8" fill="#262626" stroke="#262626" stroke-width="1.5"/><rect x="1185.9999999999998" y="62.6" width="5.199999999999999" height="5.199999999999999" fill="#3a3a3a" stroke="#5ec4c4" stroke-width="1.6"/><rect x="1187.6999999999998" y="64.3" width="1.8" height="1.8" fill="#e8e8e8"/><line x1="1192.3" y1="69" x2="1207" y2="84.2" stroke="#262626" stroke-width="3.6" stroke-linecap="round"/><line x1="1192.3" y1="69" x2="1207" y2="84.2" stroke="#d6d6d6" stroke-width="2.2" stroke-linecap="round"/><polygon points="1212.8,85.5 1212.8,90 1208.3,90" fill="#d6d6d6"  paint-order="stroke"/><rect x="1223.8" y="62.2" width="2.2" height="2.2" fill="#d6d6d6" rx="0" /><rect x="1221.6000000000001" y="65.3" width="6.6" height="6.6" fill="#262626" stroke="#262626" stroke-width="1.5"/><rect x="1222.4" y="66.1" width="5.0" height="5.0" fill="#3a3a3a" stroke="#5ec4c4" stroke-width="1.6"/><rect x="1224.0" y="67.69999999999999" width="1.8" height="1.8" fill="#e8e8e8"/><polygon points="1223.5,72.8 1236.5,72.8 1238.5,74.8 1225.5,74.8" fill="#d6d6d6"  paint-order="stroke"/><rect x="1234.1000000000001" y="75.8" width="6.6" height="6.6" fill="#262626" stroke="#262626" stroke-width="1.5"/><rect x="1234.9" y="76.6" width="5.0" height="5.0" fill="#3a3a3a" stroke="#5ec4c4" stroke-width="1.6"/><rect x="1236.5" y="78.19999999999999" width="1.8" height="1.8" fill="#e8e8e8"/><rect x="1236.3" y="83.6" width="2.2" height="2.2" fill="#d6d6d6" rx="0" /><polygon points="1247,85.5 1247,90 1242.5,90" fill="#d6d6d6"  paint-order="stroke"/><rect x="1253" y="60" width="1" height="29" fill="#5c5c5c"/><rect x="1255" y="61" width="1" height="29" fill="#5c5c5c"/><rect x="1253" y="60" width="1" height="1" fill="#a8a8a8"/><rect x="1255" y="61" width="1" height="1" fill="#a8a8a8"/><rect x="1253" y="62" width="1" height="1" fill="#a8a8a8"/><rect x="1255" y="63" width="1" height="1" fill="#a8a8a8"/><rect x="1253" y="64" width="1" height="1" fill="#a8a8a8"/><rect x="1255" y="65" width="1" height="1" fill="#a8a8a8"/><rect x="1253" y="66" width="1" height="1" fill="#a8a8a8"/><rect x="1255" y="67" width="1" height="1" fill="#a8a8a8"/><rect x="1253" y="68" width="1" height="1" fill="#a8a8a8"/><rect x="1255" y="69" width="1" height="1" fill="#a8a8a8"/><rect x="1253" y="70" width="1" height="1" fill="#a8a8a8"/><rect x="1255" y="71" width="1" height="1" fill="#a8a8a8"/><rect x="1253" y="72" width="1" height="1" fill="#a8a8a8"/><rect x="1255" y="73" width="1" height="1" fill="#a8a8a8"/><rect x="1253" y="74" width="1" height="1" fill="#a8a8a8"/><rect x="1255" y="75" width="1" height="1" fill="#a8a8a8"/><rect x="1253" y="76" width="1" height="1" fill="#a8a8a8"/><rect x="1255" y="77" width="1" height="1" fill="#a8a8a8"/><rect x="1253" y="78" width="1" height="1" fill="#a8a8a8"/><rect x="1255" y="79" width="1" height="1" fill="#a8a8a8"/><rect x="1253" y="80" width="1" height="1" fill="#a8a8a8"/><rect x="1255" y="81" width="1" height="1" fill="#a8a8a8"/><rect x="1253" y="82" width="1" height="1" fill="#a8a8a8"/><rect x="1255" y="83" width="1" height="1" fill="#a8a8a8"/><rect x="1253" y="84" width="1" height="1" fill="#a8a8a8"/><rect x="1255" y="85" width="1" height="1" fill="#a8a8a8"/><rect x="1253" y="86" width="1" height="1" fill="#a8a8a8"/><rect x="1255" y="87" width="1" height="1" fill="#a8a8a8"/><rect x="1253" y="88" width="1" height="1" fill="#a8a8a8"/><rect x="1255" y="89" width="1" height="1" fill="#a8a8a8"/><rect x="1260" y="59.1" width="32.1" height="31" fill="#6587c3" rx="3.5" /><path d="M1265.8,63.9 C1272,64.5 1277,66 1280,69" fill="none" stroke="#262626" stroke-width="4.0" stroke-linecap="round" stroke-linejoin="round"/><path d="M1265.8,63.9 C1272,64.5 1277,66 1280,69" fill="none" stroke="#d6d6d6" stroke-width="2.6" stroke-linecap="round" stroke-linejoin="round"/><path d="M1283,73 C1286,76 1288,81 1288,86.5" fill="none" stroke="#262626" stroke-width="4.0" stroke-linecap="round" stroke-linejoin="round"/><path d="M1283,73 C1286,76 1288,81 1288,86.5" fill="none" stroke="#d6d6d6" stroke-width="2.6" stroke-linecap="round" stroke-linejoin="round"/><rect x="1276.8" y="67.2" width="7" height="6.8" fill="#3a3a3a" stroke="#262626" stroke-width="1.2"/><rect x="1277.6" y="68" width="5.4" height="5.2" fill="none" stroke="#d6d6d6" stroke-width="1.4"/><rect x="1279.4" y="69.7" width="1.8" height="1.8" fill="#eee" rx="0" /><path d="M1265.4,82.3 C1269,77 1276,77 1279.6,82.3 C1276,87.6 1269,87.6 1265.4,82.3 Z" fill="#f2b33a" stroke="#262626" stroke-width="1"/><circle cx="1272.5" cy="82.3" r="3.2" fill="#2a2a2a" /><circle cx="1273.7" cy="81.4" r="1" fill="#f2b33a" /><line x1="1302.8" y1="69" x2="1309" y2="78.5" stroke="#262626" stroke-width="3.6" stroke-linecap="round"/><line x1="1302.8" y1="69" x2="1309" y2="78.5" stroke="#d6d6d6" stroke-width="2.2" stroke-linecap="round"/><line x1="1317.8" y1="69" x2="1311.6" y2="78.5" stroke="#262626" stroke-width="3.6" stroke-linecap="round"/><line x1="1317.8" y1="69" x2="1311.6" y2="78.5" stroke="#f2b33a" stroke-width="2.2" stroke-linecap="round"/><rect x="1298.2" y="61.7" width="7" height="7" fill="#262626" stroke="#262626" stroke-width="1.5"/><rect x="1299.0" y="62.5" width="5.4" height="5.4" fill="#3a3a3a" stroke="#d6d6d6" stroke-width="1.6"/><rect x="1300.8" y="64.3" width="1.8" height="1.8" fill="#e8e8e8"/><rect x="1315.4" y="61.7" width="7" height="7" fill="#262626" stroke="#262626" stroke-width="1.5"/><rect x="1316.2" y="62.5" width="5.4" height="5.4" fill="#3a3a3a" stroke="#f2b33a" stroke-width="1.6"/><rect x="1318.0" y="64.3" width="1.8" height="1.8" fill="#e8e8e8"/><rect x="1306.8" y="78.8" width="7" height="7" fill="#262626" stroke="#262626" stroke-width="1.5"/><rect x="1307.6" y="79.6" width="5.4" height="5.4" fill="#3a3a3a" stroke="#f2b33a" stroke-width="1.6"/><rect x="1309.3999999999999" y="81.39999999999999" width="1.8" height="1.8" fill="#e8e8e8"/><line x1="1338.5" y1="68.5" x2="1341.5" y2="70.6" stroke="#d6d6d6" stroke-width="1.2" stroke-linecap="round"/><line x1="1347.5" y1="77" x2="1350" y2="79" stroke="#d6d6d6" stroke-width="1.2" stroke-linecap="round"/><rect x="1332.1" y="61.7" width="7" height="7" fill="#262626" stroke="#262626" stroke-width="1.5"/><rect x="1332.8999999999999" y="62.5" width="5.4" height="5.4" fill="#3a3a3a" stroke="#d6d6d6" stroke-width="1.6"/><rect x="1334.6999999999998" y="64.3" width="1.8" height="1.8" fill="#e8e8e8"/><rect x="1340.7" y="70.3" width="7" height="7" fill="#262626" stroke="#262626" stroke-width="1.5"/><rect x="1341.5" y="71.1" width="5.4" height="5.4" fill="#3a3a3a" stroke="#f2b33a" stroke-width="1.6"/><rect x="1343.3" y="72.89999999999999" width="1.8" height="1.8" fill="#e8e8e8"/><rect x="1349.3" y="78.8" width="7" height="7" fill="#262626" stroke="#262626" stroke-width="1.5"/><rect x="1350.1" y="79.6" width="5.4" height="5.4" fill="#3a3a3a" stroke="#d6d6d6" stroke-width="1.6"/><rect x="1351.8999999999999" y="81.39999999999999" width="1.8" height="1.8" fill="#e8e8e8"/></svg>
<svg class="abs" style="left:0;top:0" width="1362" height="474"><rect x="4" y="438" width="1" height="28" fill="#5c5c5c"/><rect x="6" y="439" width="1" height="28" fill="#5c5c5c"/><rect x="4" y="438" width="1" height="1" fill="#a8a8a8"/><rect x="6" y="439" width="1" height="1" fill="#a8a8a8"/><rect x="4" y="440" width="1" height="1" fill="#a8a8a8"/><rect x="6" y="441" width="1" height="1" fill="#a8a8a8"/><rect x="4" y="442" width="1" height="1" fill="#a8a8a8"/><rect x="6" y="443" width="1" height="1" fill="#a8a8a8"/><rect x="4" y="444" width="1" height="1" fill="#a8a8a8"/><rect x="6" y="445" width="1" height="1" fill="#a8a8a8"/><rect x="4" y="446" width="1" height="1" fill="#a8a8a8"/><rect x="6" y="447" width="1" height="1" fill="#a8a8a8"/><rect x="4" y="448" width="1" height="1" fill="#a8a8a8"/><rect x="6" y="449" width="1" height="1" fill="#a8a8a8"/><rect x="4" y="450" width="1" height="1" fill="#a8a8a8"/><rect x="6" y="451" width="1" height="1" fill="#a8a8a8"/><rect x="4" y="452" width="1" height="1" fill="#a8a8a8"/><rect x="6" y="453" width="1" height="1" fill="#a8a8a8"/><rect x="4" y="454" width="1" height="1" fill="#a8a8a8"/><rect x="6" y="455" width="1" height="1" fill="#a8a8a8"/><rect x="4" y="456" width="1" height="1" fill="#a8a8a8"/><rect x="6" y="457" width="1" height="1" fill="#a8a8a8"/><rect x="4" y="458" width="1" height="1" fill="#a8a8a8"/><rect x="6" y="459" width="1" height="1" fill="#a8a8a8"/><rect x="4" y="460" width="1" height="1" fill="#a8a8a8"/><rect x="6" y="461" width="1" height="1" fill="#a8a8a8"/><rect x="4" y="462" width="1" height="1" fill="#a8a8a8"/><rect x="6" y="463" width="1" height="1" fill="#a8a8a8"/><rect x="4" y="464" width="1" height="1" fill="#a8a8a8"/><rect x="6" y="465" width="1" height="1" fill="#a8a8a8"/><rect x="21" y="440" width="18" height="18" fill="#d4d4d4" rx="0" /><line x1="22.8" y1="456.5" x2="16.6" y2="462.6" stroke="#5ec4c4" stroke-width="2.4" stroke-linecap="round"/><circle cx="26.4" cy="452.5" r="6.8" fill="#2e2e2e" /><circle cx="26.4" cy="452.5" r="5.9" fill="#5ec4c4" /><circle cx="26.4" cy="452.5" r="3.7" fill="#d4d4d4" /><rect x="47.6" y="443.3" width="1.6" height="16.7" fill="#1a1a1a" rx="0" /><rect x="52" y="444.1" width="157.7" height="15" fill="#626262" rx="0" /><rect x="217.2" y="443.3" width="1.4" height="16.7" fill="#1a1a1a" rx="0" /><rect x="229" y="441" width="23.9" height="3.5" fill="#e0e0e0" rx="0" stroke="#262626" stroke-width="0.8"/><rect x="229" y="446.3" width="23.9" height="3.5" fill="#e0e0e0" rx="0" stroke="#262626" stroke-width="0.8"/><rect x="229" y="451.6" width="23.9" height="3.5" fill="#e0e0e0" rx="0" stroke="#262626" stroke-width="0.8"/><g transform="translate(240.5,462.6) rotate(-43)"><path d="M0,0 L3.5,-2.3 L15.5,-2.3 A2.3,2.3 0 0 1 15.5,2.3 L3.5,2.3 Z" fill="#f2b33a" stroke="#262626" stroke-width="1"/></g><rect x="259" y="438.8" width="126.1" height="20.3" fill="#636363" rx="0" /><polygon points="371,447.2 377.2,447.2 374.1,451.6" fill="#e8e8e8"  paint-order="stroke"/><rect x="390.8" y="441" width="24.2" height="3.5" fill="#e0e0e0" rx="0" stroke="#262626" stroke-width="0.8"/><rect x="390.8" y="446.3" width="24.2" height="3.5" fill="#e0e0e0" rx="0" stroke="#262626" stroke-width="0.8"/><rect x="390.8" y="451.6" width="24.2" height="3.5" fill="#e0e0e0" rx="0" stroke="#262626" stroke-width="0.8"/><polygon points="390.8,450.7 404.0,450.7 398.72,457.575 398.72,463.2 396.08,461.95 396.08,457.575" fill="#f2b33a" stroke="#262626" stroke-width="1.3" stroke-linejoin="round" paint-order="stroke"/><rect x="421.2" y="437.1" width="31.8" height="30.9" fill="#6587c3" rx="3.5" /><rect x="430" y="441.5" width="19.9" height="19.4" fill="#d4d4d4" rx="0" stroke="#262626" stroke-width="1.3"/><polygon points="425.6,450.3 438.40000000000003,450.3 433.28000000000003,458.27500000000003 433.28000000000003,464.8 430.72,463.35 430.72,458.27500000000003" fill="#f2b33a" stroke="#262626" stroke-width="1.3" stroke-linejoin="round" paint-order="stroke"/><rect x="459.5" y="440.5" width="23.5" height="17.5" fill="#d6d6d6" stroke="#262626" stroke-width="1"/><rect x="461" y="441.3" width="1.8" height="1.4" fill="#333" rx="0" /><rect x="461" y="455.7" width="1.8" height="1.4" fill="#333" rx="0" /><rect x="464" y="441.3" width="1.8" height="1.4" fill="#333" rx="0" /><rect x="464" y="455.7" width="1.8" height="1.4" fill="#333" rx="0" /><rect x="467" y="441.3" width="1.8" height="1.4" fill="#333" rx="0" /><rect x="467" y="455.7" width="1.8" height="1.4" fill="#333" rx="0" /><rect x="470" y="441.3" width="1.8" height="1.4" fill="#333" rx="0" /><rect x="470" y="455.7" width="1.8" height="1.4" fill="#333" rx="0" /><rect x="473" y="441.3" width="1.8" height="1.4" fill="#333" rx="0" /><rect x="473" y="455.7" width="1.8" height="1.4" fill="#333" rx="0" /><rect x="476" y="441.3" width="1.8" height="1.4" fill="#333" rx="0" /><rect x="476" y="455.7" width="1.8" height="1.4" fill="#333" rx="0" /><rect x="479" y="441.3" width="1.8" height="1.4" fill="#333" rx="0" /><rect x="479" y="455.7" width="1.8" height="1.4" fill="#333" rx="0" /><rect x="461" y="443.8" width="19.5" height="10.8" fill="#3a3a3a" rx="0" /><rect x="462" y="444.5" width="5" height="9.4" fill="#d6d6d6" rx="0" /><rect x="468.5" y="444.5" width="5" height="9.4" fill="#d6d6d6" rx="0" /><rect x="475" y="444.5" width="5" height="9.4" fill="#d6d6d6" rx="0" /><polygon points="459,450.5 471.5,450.5 466.5,457.76 466.5,463.7 464.0,462.38 464.0,457.76" fill="#f2b33a" stroke="#262626" stroke-width="1.3" stroke-linejoin="round" paint-order="stroke"/><polygon points="494,444.2 505.2,440 516.5,444.2 505.2,448.5" fill="#5ec4c4"  paint-order="stroke"/><polygon points="494.5,453.5 505.5,449.5 516.5,453.5 505.5,457.5" fill="#d6d6d6" stroke="#262626" stroke-width="0.9" stroke-linejoin="round" paint-order="stroke"/><polygon points="494.5,459.5 505.5,455.5 516.5,459.5 505.5,463.5" fill="#d6d6d6" stroke="#262626" stroke-width="0.9" stroke-linejoin="round" paint-order="stroke"/><polygon points="494,450.5 506.5,450.5 501.5,457.76 501.5,463.7 499.0,462.38 499.0,457.76" fill="#f2b33a" stroke="#262626" stroke-width="1.3" stroke-linejoin="round" paint-order="stroke"/><circle cx="539.6" cy="451.8" r="10.3" fill="none" stroke="#d6d6d6" stroke-width="1.8"/><g transform="translate(534.5,456) rotate(-46.4)"><ellipse cx="0" cy="0" rx="3.405" ry="2.6287499999999997" fill="none" stroke="#262626" stroke-width="3.83"/><line x1="3.105" y1="0" x2="14.5" y2="0" stroke="#262626" stroke-width="3.83" stroke-linecap="round"/><line x1="13.005" y1="0" x2="13.005" y2="-3.3349999999999995" stroke="#262626" stroke-width="2.9899999999999998"/><line x1="10.13" y1="0" x2="10.13" y2="-2.76" stroke="#262626" stroke-width="2.9899999999999998"/><ellipse cx="0" cy="0" rx="3.105" ry="2.32875" fill="none" stroke="#d6d6d6" stroke-width="2.53"/><line x1="3.105" y1="0" x2="14.5" y2="0" stroke="#d6d6d6" stroke-width="2.53" stroke-linecap="round"/><line x1="13.005" y1="0" x2="13.005" y2="-3.105" stroke="#d6d6d6" stroke-width="1.6099999999999999"/><line x1="10.13" y1="0" x2="10.13" y2="-2.53" stroke="#d6d6d6" stroke-width="1.6099999999999999"/></g><path d="M537.6,459.8 C541,455 548,455 551.5,459.8 C548,464.6 541,464.6 537.6,459.8 Z" fill="#f2b33a" stroke="#262626" stroke-width="1"/><circle cx="544.6" cy="459.8" r="2.3" fill="#2a2a2a" /><path d="M562,447.2 C568,439 579,439 585,447.2 C579,455.4 568,455.4 562,447.2 Z" fill="#d6d6d6" stroke="#262626" stroke-width="1"/><circle cx="574" cy="446.8" r="4.7" fill="#2c2c2c" /><circle cx="575.5" cy="445.2" r="1.3" fill="#d6d6d6" /><polygon points="562,450.5 574.6,450.5 569.56,457.76 569.56,463.7 567.04,462.38 567.04,457.76" fill="#f2b33a" stroke="#262626" stroke-width="1.3" stroke-linejoin="round" paint-order="stroke"/><path d="M598.5,450 V447 A5.3,5.3 0 0 1 609,447 V450" fill="none" stroke="#262626" stroke-width="3.6" stroke-linecap="round" stroke-linejoin="round"/><path d="M598.5,450 V447 A5.3,5.3 0 0 1 609,447 V450" fill="none" stroke="#d6d6d6" stroke-width="2.2" stroke-linecap="round" stroke-linejoin="round"/><rect x="605" y="449.9" width="14.5" height="13.1" fill="#d6d6d6" rx="1" stroke="#262626" stroke-width="1"/><rect x="611.3" y="453.5" width="2" height="5.5" fill="#333" rx="0" /><polygon points="595.7,450.5 608.3000000000001,450.5 603.26,457.76 603.26,463.7 600.74,462.38 600.74,457.76" fill="#f2b33a" stroke="#262626" stroke-width="1.3" stroke-linejoin="round" paint-order="stroke"/><rect x="635" y="438" width="1" height="28" fill="#5c5c5c"/><rect x="637" y="439" width="1" height="28" fill="#5c5c5c"/><rect x="635" y="438" width="1" height="1" fill="#a8a8a8"/><rect x="637" y="439" width="1" height="1" fill="#a8a8a8"/><rect x="635" y="440" width="1" height="1" fill="#a8a8a8"/><rect x="637" y="441" width="1" height="1" fill="#a8a8a8"/><rect x="635" y="442" width="1" height="1" fill="#a8a8a8"/><rect x="637" y="443" width="1" height="1" fill="#a8a8a8"/><rect x="635" y="444" width="1" height="1" fill="#a8a8a8"/><rect x="637" y="445" width="1" height="1" fill="#a8a8a8"/><rect x="635" y="446" width="1" height="1" fill="#a8a8a8"/><rect x="637" y="447" width="1" height="1" fill="#a8a8a8"/><rect x="635" y="448" width="1" height="1" fill="#a8a8a8"/><rect x="637" y="449" width="1" height="1" fill="#a8a8a8"/><rect x="635" y="450" width="1" height="1" fill="#a8a8a8"/><rect x="637" y="451" width="1" height="1" fill="#a8a8a8"/><rect x="635" y="452" width="1" height="1" fill="#a8a8a8"/><rect x="637" y="453" width="1" height="1" fill="#a8a8a8"/><rect x="635" y="454" width="1" height="1" fill="#a8a8a8"/><rect x="637" y="455" width="1" height="1" fill="#a8a8a8"/><rect x="635" y="456" width="1" height="1" fill="#a8a8a8"/><rect x="637" y="457" width="1" height="1" fill="#a8a8a8"/><rect x="635" y="458" width="1" height="1" fill="#a8a8a8"/><rect x="637" y="459" width="1" height="1" fill="#a8a8a8"/><rect x="635" y="460" width="1" height="1" fill="#a8a8a8"/><rect x="637" y="461" width="1" height="1" fill="#a8a8a8"/><rect x="635" y="462" width="1" height="1" fill="#a8a8a8"/><rect x="637" y="463" width="1" height="1" fill="#a8a8a8"/><rect x="635" y="464" width="1" height="1" fill="#a8a8a8"/><rect x="637" y="465" width="1" height="1" fill="#a8a8a8"/><rect x="642.9" y="444" width="73.4" height="15.3" fill="#626262" rx="0" /><text x="646.3" y="456.2" font-size="12" fill="#e6e6e6" font-family="Liberation Sans">136</text><rect x="719" y="443.3" width="1.5" height="16.7" fill="#1a1a1a" rx="0" /><rect x="721.8" y="444" width="73.4" height="15.3" fill="#626262" rx="0" /><text x="724.5" y="456.2" font-size="12" fill="#e6e6e6" font-family="Liberation Sans">0.000</text><rect x="802.3" y="443" width="1.4" height="17" fill="#1a1a1a" rx="0" /><g transform="translate(819.3,457.9) rotate(-43.8)"><ellipse cx="0" cy="0" rx="4.3500000000000005" ry="3.3375000000000004" fill="none" stroke="#262626" stroke-width="4.6000000000000005"/><line x1="4.050000000000001" y1="0" x2="23.41046774415246" y2="0" stroke="#262626" stroke-width="4.6000000000000005" stroke-linecap="round"/><line x1="21.46046774415246" y1="0" x2="21.46046774415246" y2="-4.35" stroke="#262626" stroke-width="3.9000000000000004"/><line x1="17.71046774415246" y1="0" x2="17.71046774415246" y2="-3.5999999999999996" stroke="#262626" stroke-width="3.9000000000000004"/><ellipse cx="0" cy="0" rx="4.050000000000001" ry="3.0375000000000005" fill="none" stroke="#d6d6d6" stroke-width="3.3000000000000003"/><line x1="4.050000000000001" y1="0" x2="23.41046774415246" y2="0" stroke="#d6d6d6" stroke-width="3.3000000000000003" stroke-linecap="round"/><line x1="21.46046774415246" y1="0" x2="21.46046774415246" y2="-4.050000000000001" stroke="#d6d6d6" stroke-width="2.0999999999999996"/><line x1="17.71046774415246" y1="0" x2="17.71046774415246" y2="-3.3000000000000003" stroke="#d6d6d6" stroke-width="2.0999999999999996"/></g><text x="829.5" y="463.5" font-size="15" font-weight="bold" fill="#5ec4c4" font-family="Liberation Mono">i</text><rect x="864" y="438" width="1" height="28" fill="#5c5c5c"/><rect x="866" y="439" width="1" height="28" fill="#5c5c5c"/><rect x="864" y="438" width="1" height="1" fill="#a8a8a8"/><rect x="866" y="439" width="1" height="1" fill="#a8a8a8"/><rect x="864" y="440" width="1" height="1" fill="#a8a8a8"/><rect x="866" y="441" width="1" height="1" fill="#a8a8a8"/><rect x="864" y="442" width="1" height="1" fill="#a8a8a8"/><rect x="866" y="443" width="1" height="1" fill="#a8a8a8"/><rect x="864" y="444" width="1" height="1" fill="#a8a8a8"/><rect x="866" y="445" width="1" height="1" fill="#a8a8a8"/><rect x="864" y="446" width="1" height="1" fill="#a8a8a8"/><rect x="866" y="447" width="1" height="1" fill="#a8a8a8"/><rect x="864" y="448" width="1" height="1" fill="#a8a8a8"/><rect x="866" y="449" width="1" height="1" fill="#a8a8a8"/><rect x="864" y="450" width="1" height="1" fill="#a8a8a8"/><rect x="866" y="451" width="1" height="1" fill="#a8a8a8"/><rect x="864" y="452" width="1" height="1" fill="#a8a8a8"/><rect x="866" y="453" width="1" height="1" fill="#a8a8a8"/><rect x="864" y="454" width="1" height="1" fill="#a8a8a8"/><rect x="866" y="455" width="1" height="1" fill="#a8a8a8"/><rect x="864" y="456" width="1" height="1" fill="#a8a8a8"/><rect x="866" y="457" width="1" height="1" fill="#a8a8a8"/><rect x="864" y="458" width="1" height="1" fill="#a8a8a8"/><rect x="866" y="459" width="1" height="1" fill="#a8a8a8"/><rect x="864" y="460" width="1" height="1" fill="#a8a8a8"/><rect x="866" y="461" width="1" height="1" fill="#a8a8a8"/><rect x="864" y="462" width="1" height="1" fill="#a8a8a8"/><rect x="866" y="463" width="1" height="1" fill="#a8a8a8"/><rect x="864" y="464" width="1" height="1" fill="#a8a8a8"/><rect x="866" y="465" width="1" height="1" fill="#a8a8a8"/><path d="M878.6,440.2 V463.3 M876.3,460.5 H899.4" fill="none" stroke="#262626" stroke-width="3.4" stroke-linecap="butt" stroke-linejoin="round"/><path d="M878.6,440.2 V463.3 M876.3,460.5 H899.4" fill="none" stroke="#d6d6d6" stroke-width="2" stroke-linecap="butt" stroke-linejoin="round"/><circle cx="883.5" cy="446.5" r="1.2" fill="#5ec4c4" /><circle cx="889" cy="445" r="1.2" fill="#5ec4c4" /><circle cx="892.5" cy="449.5" r="1.2" fill="#5ec4c4" /><circle cx="897.5" cy="448.5" r="1.2" fill="#5ec4c4" /><path d="M911.7,439.5 H914.4 V459 H920 V461.7 H914.4 V464.4 H911.7 Z" fill="#4a4a4a" stroke="#262626" stroke-width="1.1"/><path d="M917,447 L922,444.5 L927,449 L932,447.5" fill="none" stroke="#262626" stroke-width="3" stroke-linecap="round" stroke-dasharray="3.2,2.2"/><path d="M917,447 L922,444.5 L927,449 L932,447.5" fill="none" stroke="#4a4a4a" stroke-width="1.4" stroke-linecap="round" stroke-dasharray="3.2,2.2"/><path d="M920.5,459.3 C924,454 931,454 934.5,459.3 C931,464.6 924,464.6 920.5,459.3 Z" fill="#4a4a4a" stroke="#262626" stroke-width="1.2"/><circle cx="926.5" cy="459.3" r="2.2" fill="#262626" /><path d="M944,442.5 C948,438.5 954,440 956,443 C959,446.5 965,447 968,442.5" fill="none" stroke="#262626" stroke-width="3.2" stroke-linecap="round" stroke-linejoin="round"/><path d="M944,442.5 C948,438.5 954,440 956,443 C959,446.5 965,447 968,442.5" fill="none" stroke="#4a4a4a" stroke-width="1.5" stroke-linecap="round" stroke-linejoin="round"/><polygon points="949.8000000000001,448.3 952.6,448.3 952.6,451.5 954.4000000000001,451.5 951.2,454.9 948.0,451.5 949.8000000000001,451.5" fill="#4a4a4a" stroke="#262626" stroke-width="1.1"/><polygon points="959.4,454.7 962.1999999999999,454.7 962.1999999999999,451.5 964.0,451.5 960.8,448.1 957.5999999999999,451.5 959.4,451.5" fill="#4a4a4a" stroke="#262626" stroke-width="1.1"/><path d="M944,461 C948,456.5 953,456.5 956,460 C959,463.5 964,464 968,459.5" fill="none" stroke="#262626" stroke-width="3.4" stroke-linecap="round" stroke-dasharray="3.2,2.2"/><path d="M944,461 C948,456.5 953,456.5 956,460 C959,463.5 964,464 968,459.5" fill="none" stroke="#4a4a4a" stroke-width="1.8" stroke-linecap="round" stroke-dasharray="3.2,2.2"/><path d="M978,442.5 C982,438.5 988,440 990,443 C993,446.5 999,447 1002,442.5" fill="none" stroke="#262626" stroke-width="3.2" stroke-linecap="round" stroke-linejoin="round"/><path d="M978,442.5 C982,438.5 988,440 990,443 C993,446.5 999,447 1002,442.5" fill="none" stroke="#4a4a4a" stroke-width="1.5" stroke-linecap="round" stroke-linejoin="round"/><polygon points="988.6,448.3 991.4,448.3 991.4,451.5 993.2,451.5 990,454.9 986.8,451.5 988.6,451.5" fill="#4a4a4a" stroke="#262626" stroke-width="1.1"/><path d="M978,461 C982,456.5 987,456.5 990,460 C993,463.5 998,464 1002,459.5" fill="none" stroke="#262626" stroke-width="3.4" stroke-linecap="round" stroke-dasharray="3.2,2.2"/><path d="M978,461 C982,456.5 987,456.5 990,460 C993,463.5 998,464 1002,459.5" fill="none" stroke="#4a4a4a" stroke-width="1.8" stroke-linecap="round" stroke-dasharray="3.2,2.2"/><path d="M1012,442.5 C1016,438.5 1022,440 1024,443 C1027,446.5 1033,447 1036,442.5" fill="none" stroke="#262626" stroke-width="3.4" stroke-linecap="round" stroke-dasharray="3.2,2.2"/><path d="M1012,442.5 C1016,438.5 1022,440 1024,443 C1027,446.5 1033,447 1036,442.5" fill="none" stroke="#4a4a4a" stroke-width="1.8" stroke-linecap="round" stroke-dasharray="3.2,2.2"/><polygon points="1022.6,448.8 1025.4,448.8 1025.4,452 1027.2,452 1024,455.4 1020.8,452 1022.6,452" fill="#4a4a4a" stroke="#262626" stroke-width="1.1"/><path d="M1012,459.5 C1016,456 1022,456 1024,459 C1027,463 1033,464 1036,459.5" fill="none" stroke="#262626" stroke-width="3.2" stroke-linecap="round" stroke-linejoin="round"/><path d="M1012,459.5 C1016,456 1022,456 1024,459 C1027,463 1033,464 1036,459.5" fill="none" stroke="#4a4a4a" stroke-width="1.5" stroke-linecap="round" stroke-linejoin="round"/><rect x="1045.3" y="438" width="1" height="28" fill="#5c5c5c"/><rect x="1047.3" y="439" width="1" height="28" fill="#5c5c5c"/><rect x="1045.3" y="438" width="1" height="1" fill="#a8a8a8"/><rect x="1047.3" y="439" width="1" height="1" fill="#a8a8a8"/><rect x="1045.3" y="440" width="1" height="1" fill="#a8a8a8"/><rect x="1047.3" y="441" width="1" height="1" fill="#a8a8a8"/><rect x="1045.3" y="442" width="1" height="1" fill="#a8a8a8"/><rect x="1047.3" y="443" width="1" height="1" fill="#a8a8a8"/><rect x="1045.3" y="444" width="1" height="1" fill="#a8a8a8"/><rect x="1047.3" y="445" width="1" height="1" fill="#a8a8a8"/><rect x="1045.3" y="446" width="1" height="1" fill="#a8a8a8"/><rect x="1047.3" y="447" width="1" height="1" fill="#a8a8a8"/><rect x="1045.3" y="448" width="1" height="1" fill="#a8a8a8"/><rect x="1047.3" y="449" width="1" height="1" fill="#a8a8a8"/><rect x="1045.3" y="450" width="1" height="1" fill="#a8a8a8"/><rect x="1047.3" y="451" width="1" height="1" fill="#a8a8a8"/><rect x="1045.3" y="452" width="1" height="1" fill="#a8a8a8"/><rect x="1047.3" y="453" width="1" height="1" fill="#a8a8a8"/><rect x="1045.3" y="454" width="1" height="1" fill="#a8a8a8"/><rect x="1047.3" y="455" width="1" height="1" fill="#a8a8a8"/><rect x="1045.3" y="456" width="1" height="1" fill="#a8a8a8"/><rect x="1047.3" y="457" width="1" height="1" fill="#a8a8a8"/><rect x="1045.3" y="458" width="1" height="1" fill="#a8a8a8"/><rect x="1047.3" y="459" width="1" height="1" fill="#a8a8a8"/><rect x="1045.3" y="460" width="1" height="1" fill="#a8a8a8"/><rect x="1047.3" y="461" width="1" height="1" fill="#a8a8a8"/><rect x="1045.3" y="462" width="1" height="1" fill="#a8a8a8"/><rect x="1047.3" y="463" width="1" height="1" fill="#a8a8a8"/><rect x="1045.3" y="464" width="1" height="1" fill="#a8a8a8"/><rect x="1047.3" y="465" width="1" height="1" fill="#a8a8a8"/><path d="M1064,463 C1061,459 1059,456 1060,454.5 C1061.5,453.5 1063.5,455 1064.5,456.5 V444.5 A1.5,1.5 0 0 1 1067.5,444.5 V451 V442 A1.5,1.5 0 0 1 1070.5,442 V451 V443 A1.5,1.5 0 0 1 1073.5,443 V451 V445.5 A1.5,1.5 0 0 1 1076.5,445.5 V456 C1076.5,460 1075,462 1073.5,463 Z" fill="#d6d6d6" stroke="#262626" stroke-width="0.9"/><rect x="1092.2" y="443.3" width="1.4" height="16.5" fill="#1a1a1a" rx="0" /><path d="M1107.5,441 H1104.8 V462.7 H1107.5 M1124.5,441 H1127.2 V462.7 H1124.5" fill="none" stroke="#262626" stroke-width="3.4" stroke-linecap="butt" stroke-linejoin="round"/><path d="M1107.5,441 H1104.8 V462.7 H1107.5 M1124.5,441 H1127.2 V462.7 H1124.5" fill="none" stroke="#d6d6d6" stroke-width="2" stroke-linecap="butt" stroke-linejoin="round"/><g transform="translate(1110.7,449.9) rotate(-40.7)"><ellipse cx="0" cy="0" rx="2.73" ry="2.1225" fill="none" stroke="#262626" stroke-width="3.2800000000000002"/><line x1="2.43" y1="0" x2="12.26743657004181" y2="0" stroke="#262626" stroke-width="3.2800000000000002" stroke-linecap="round"/><line x1="11.09743657004181" y1="0" x2="11.09743657004181" y2="-2.61" stroke="#262626" stroke-width="2.3400000000000003"/><line x1="8.84743657004181" y1="0" x2="8.84743657004181" y2="-2.16" stroke="#262626" stroke-width="2.3400000000000003"/><ellipse cx="0" cy="0" rx="2.43" ry="1.8225000000000002" fill="none" stroke="#5ec4c4" stroke-width="1.9800000000000002"/><line x1="2.43" y1="0" x2="12.26743657004181" y2="0" stroke="#5ec4c4" stroke-width="1.9800000000000002" stroke-linecap="round"/><line x1="11.09743657004181" y1="0" x2="11.09743657004181" y2="-2.43" stroke="#5ec4c4" stroke-width="1.26"/><line x1="8.84743657004181" y1="0" x2="8.84743657004181" y2="-1.9800000000000002" stroke="#5ec4c4" stroke-width="1.26"/></g><g transform="translate(1114,459.8) rotate(-44.4)"><ellipse cx="0" cy="0" rx="2.73" ry="2.1225" fill="none" stroke="#262626" stroke-width="3.2800000000000002"/><line x1="2.43" y1="0" x2="14.001428498549718" y2="0" stroke="#262626" stroke-width="3.2800000000000002" stroke-linecap="round"/><line x1="12.831428498549718" y1="0" x2="12.831428498549718" y2="-2.61" stroke="#262626" stroke-width="2.3400000000000003"/><line x1="10.581428498549718" y1="0" x2="10.581428498549718" y2="-2.16" stroke="#262626" stroke-width="2.3400000000000003"/><ellipse cx="0" cy="0" rx="2.43" ry="1.8225000000000002" fill="none" stroke="#5ec4c4" stroke-width="1.9800000000000002"/><line x1="2.43" y1="0" x2="14.001428498549718" y2="0" stroke="#5ec4c4" stroke-width="1.9800000000000002" stroke-linecap="round"/><line x1="12.831428498549718" y1="0" x2="12.831428498549718" y2="-2.43" stroke="#5ec4c4" stroke-width="1.26"/><line x1="10.581428498549718" y1="0" x2="10.581428498549718" y2="-1.9800000000000002" stroke="#5ec4c4" stroke-width="1.26"/></g><polygon points="1132,463.2 1132,467.7 1127.5,467.7" fill="#d6d6d6"  paint-order="stroke"/><path d="M1138.8,444.5 V441 H1161.2 V444.5 M1138.8,458.5 V462 H1161.2 V458.5" fill="none" stroke="#262626" stroke-width="3.4" stroke-linecap="butt" stroke-linejoin="round"/><path d="M1138.8,444.5 V441 H1161.2 V444.5 M1138.8,458.5 V462 H1161.2 V458.5" fill="none" stroke="#d6d6d6" stroke-width="2" stroke-linecap="butt" stroke-linejoin="round"/><g transform="translate(1141.8,453.8) rotate(-43.7)"><ellipse cx="0" cy="0" rx="2.73" ry="2.1225" fill="none" stroke="#262626" stroke-width="3.2800000000000002"/><line x1="2.43" y1="0" x2="12.73106437027168" y2="0" stroke="#262626" stroke-width="3.2800000000000002" stroke-linecap="round"/><line x1="11.56106437027168" y1="0" x2="11.56106437027168" y2="-2.61" stroke="#262626" stroke-width="2.3400000000000003"/><line x1="9.31106437027168" y1="0" x2="9.31106437027168" y2="-2.16" stroke="#262626" stroke-width="2.3400000000000003"/><ellipse cx="0" cy="0" rx="2.43" ry="1.8225000000000002" fill="none" stroke="#5ec4c4" stroke-width="1.9800000000000002"/><line x1="2.43" y1="0" x2="12.73106437027168" y2="0" stroke="#5ec4c4" stroke-width="1.9800000000000002" stroke-linecap="round"/><line x1="11.56106437027168" y1="0" x2="11.56106437027168" y2="-2.43" stroke="#5ec4c4" stroke-width="1.26"/><line x1="9.31106437027168" y1="0" x2="9.31106437027168" y2="-1.9800000000000002" stroke="#5ec4c4" stroke-width="1.26"/></g><g transform="translate(1152.3,456.5) rotate(-47.5)"><ellipse cx="0" cy="0" rx="2.73" ry="2.1225" fill="none" stroke="#262626" stroke-width="3.2800000000000002"/><line x1="2.43" y1="0" x2="12.881770064707753" y2="0" stroke="#262626" stroke-width="3.2800000000000002" stroke-linecap="round"/><line x1="11.711770064707753" y1="0" x2="11.711770064707753" y2="-2.61" stroke="#262626" stroke-width="2.3400000000000003"/><line x1="9.461770064707753" y1="0" x2="9.461770064707753" y2="-2.16" stroke="#262626" stroke-width="2.3400000000000003"/><ellipse cx="0" cy="0" rx="2.43" ry="1.8225000000000002" fill="none" stroke="#5ec4c4" stroke-width="1.9800000000000002"/><line x1="2.43" y1="0" x2="12.881770064707753" y2="0" stroke="#5ec4c4" stroke-width="1.9800000000000002" stroke-linecap="round"/><line x1="11.711770064707753" y1="0" x2="11.711770064707753" y2="-2.43" stroke="#5ec4c4" stroke-width="1.26"/><line x1="9.461770064707753" y1="0" x2="9.461770064707753" y2="-1.9800000000000002" stroke="#5ec4c4" stroke-width="1.26"/></g><polygon points="1166,463.2 1166,467.7 1161.5,467.7" fill="#d6d6d6"  paint-order="stroke"/><path d="M1173.2,444 V441 H1182.4 V444 M1173.2,446.5 V449.5 H1182.4 V446.5" fill="none" stroke="#262626" stroke-width="3.4" stroke-linecap="butt" stroke-linejoin="round"/><path d="M1173.2,444 V441 H1182.4 V444 M1173.2,446.5 V449.5 H1182.4 V446.5" fill="none" stroke="#d6d6d6" stroke-width="2" stroke-linecap="butt" stroke-linejoin="round"/><path d="M1188,454.2 H1186.4 V462.7 H1188 M1193.5,454.2 H1195 V462.7 H1193.5" fill="none" stroke="#262626" stroke-width="3.4" stroke-linecap="butt" stroke-linejoin="round"/><path d="M1188,454.2 H1186.4 V462.7 H1188 M1193.5,454.2 H1195 V462.7 H1193.5" fill="none" stroke="#d6d6d6" stroke-width="2" stroke-linecap="butt" stroke-linejoin="round"/><rect x="1207.8" y="443.5" width="1.4" height="16.1" fill="#1a1a1a" rx="0" /><circle cx="1234.5" cy="448.9" r="6.6" fill="none" stroke="#262626" stroke-width="3.8"/><circle cx="1234.5" cy="448.9" r="6.6" fill="none" stroke="#d6d6d6" stroke-width="2.4"/><line x1="1229.8" y1="453.8" x2="1221.5" y2="462" stroke="#262626" stroke-width="4.0" stroke-linecap="round"/><line x1="1229.8" y1="453.8" x2="1221.5" y2="462" stroke="#d6d6d6" stroke-width="2.6" stroke-linecap="round"/><polygon points="1247,463.4 1247,467.9 1242.5,467.9" fill="#d6d6d6"  paint-order="stroke"/><rect x="1255" y="441.5" width="20.7" height="14.5" fill="none" stroke="#262626" stroke-width="3"/><rect x="1255" y="441.5" width="20.7" height="14.5" fill="none" stroke="#d6d6d6" stroke-width="1.8" stroke-dasharray="3.5,2.4"/><circle cx="1264.2" cy="453.6" r="4.3" fill="none" stroke="#262626" stroke-width="3.3"/><circle cx="1264.2" cy="453.6" r="4.3" fill="none" stroke="#5ec4c4" stroke-width="1.9"/><line x1="1261" y1="457" x2="1256.3" y2="462" stroke="#5ec4c4" stroke-width="2.1" stroke-linecap="round"/><path d="M1288.4,445 V440.4 H1293 M1306.8,440.4 H1311.4 V445 M1311.4,458.7 V463.3 H1306.8 M1293,463.3 H1288.4 V458.7" fill="none" stroke="#262626" stroke-width="2" stroke-linecap="butt" stroke-linejoin="round"/><path d="M1292,454 C1295,444 1299,444 1300,451 C1301,458 1305,458 1308,449" fill="none" stroke="#262626" stroke-width="2" stroke-linecap="round" stroke-linejoin="round"/></svg>
<div class="abs" style="left:0;top:471px;width:151px;height:3px;background:#343434"></div>
<div class="abs" style="left:179px;top:470px;width:1px;height:4px;background:#3a9a3a"></div>
<div class="abs" style="left:180px;top:472px;width:4px;height:2px;background:#2030c0"></div>
<div class="abs" style="left:207px;top:472px;width:4px;height:2px;background:#a02020"></div>
</body></html>
